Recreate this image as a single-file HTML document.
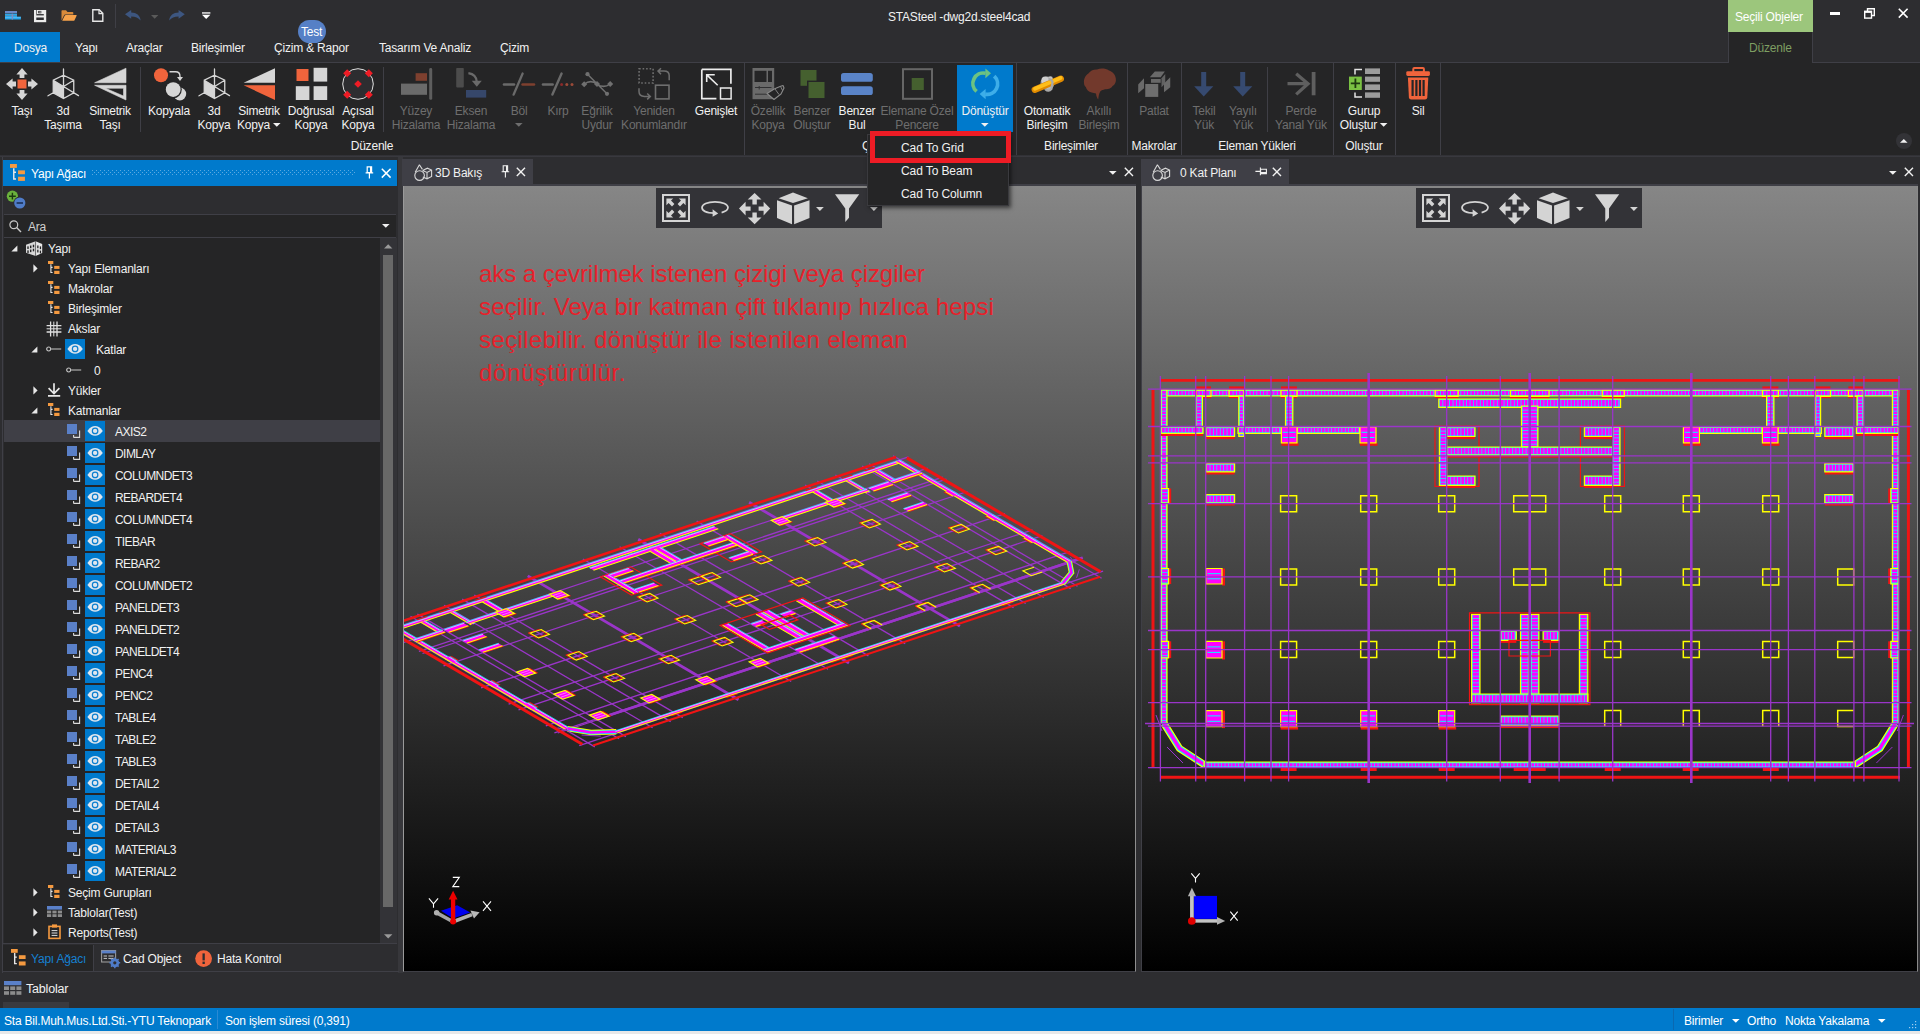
<!DOCTYPE html><html><head><meta charset="utf-8"><title>STASteel</title><style>*{box-sizing:border-box;margin:0;padding:0}
html,body{width:1920px;height:1034px;overflow:hidden;background:#2d2d30}
body{font-family:"Liberation Sans",sans-serif;font-size:12px;color:#f1f1f1;position:relative;letter-spacing:-0.2px}
.abs{position:absolute}
.t{position:absolute;white-space:nowrap;line-height:14px}
svg{position:absolute;overflow:visible}
/* title */
#title{left:0;top:0;width:1920px;height:32px;background:#2d2d30}
#tabs{left:0;top:32px;width:1920px;height:30px;background:#2d2d30}
#tabline{left:0;top:62px;width:1920px;height:1px;background:#3f3f46}
#ribbon{left:0;top:63px;width:1920px;height:93px;background:#252526}
#ribline{left:0;top:155px;width:1920px;height:2px;background:linear-gradient(#2e2e32,#3c3c42)}
.tab{position:absolute;top:32px;height:30px;line-height:30px;font-size:12px;white-space:nowrap}
.rb{position:absolute;top:104px;text-align:center;line-height:14px;white-space:nowrap;transform:translateX(-50%)}
.dis{color:#6e6e6e}
.gl{position:absolute;top:139px;line-height:14px;white-space:nowrap;transform:translateX(-50%)}
.sep{position:absolute;width:1px;background:#3f3f46}
/* left panel */
#lp{left:2px;top:157px;width:401px;height:816px;border-left:1px solid #3f3f46;border-right:5px solid #37373b;background:#2d2d30}
#lphead{left:3px;top:160px;width:394px;height:26px;background:#007acc}
#search{left:4px;top:214px;width:392px;height:24px;background:#252526;border-top:1px solid #3f3f46;border-bottom:1px solid #3f3f46}
#tree{left:4px;top:238px;width:376px;height:706px;background:#252526}
.tr{position:absolute;left:0;width:376px;height:20px}
.sel{background:#3f3f46}
.tt{position:absolute;top:3px;line-height:14px;white-space:nowrap}
/* viewports */
.vp{background:linear-gradient(#868686,#000) no-repeat;background-size:100% 785px;background-color:#000}
#st{left:0;top:1008px;width:1920px;height:23px;background:#007acc}
#stb{left:0;top:1031px;width:1920px;height:3px;background:#e8e8e8}
</style></head><body><div id="title" class="abs"></div>
<div class="t" style="left:888px;top:10px;font-size:12px">STASteel -dwg2d.steel4cad</div>
<svg style="left:5px;top:11.2px" width="16" height="9" viewBox="0 0 16 9" ><rect x="0" y="0" width="12" height="2.3" fill="#6a88c6"/><rect x="0" y="2.7" width="12" height="1.6" fill="#29a9ee"/><rect x="0" y="4.7" width="12" height="1.5" fill="#29a9ee"/><rect x="0" y="5.6" width="15.9" height="2.9" fill="#29a9ee"/><rect x="0" y="4.3" width="12" height="0.4" fill="#8fd0f6"/><rect x="0" y="6.3" width="15.9" height="0.4" fill="#8fd0f6"/><rect x="6.6" y="2.7" width="1.5" height="5.8" fill="#7a8cc4"/></svg><svg style="left:33.9px;top:9.8px" width="13" height="13" viewBox="0 0 13 13" ><rect x="0" y="0" width="12.2" height="12.2" fill="#ececec"/><rect x="2.3" y="0" width="0.6" height="4.1" fill="#2d2d30"/><rect x="9.8" y="0" width="0" height="4.1" fill="#2d2d30"/><rect x="4.2" y="0.9" width="3.1" height="2.4" fill="#2d2d30"/><rect x="5.6" y="1.3" width="0.9" height="1.6" fill="#ececec"/><rect x="2.3" y="4.1" width="7.5" height="1.3" fill="#2d2d30"/><rect x="2.3" y="7.5" width="7.5" height="2.5" fill="#2d2d30"/></svg><svg style="left:61px;top:10px" width="16" height="11" viewBox="0 0 16 11" ><path d="M0.5 10.5V1Q0.5 0.3 1.2 0.3H5L6.5 2H11.5Q12.3 2 12.3 2.8V4.4H4.2Q3.4 4.4 3.1 5.2Z" fill="#d98a3a"/><path d="M1.2 10.7L3.8 5.6Q4.1 5 4.8 5H15.2Q16 5 15.6 5.8L13.5 10.2Q13.2 10.7 12.6 10.7Z" fill="#f7a24a"/></svg><svg style="left:92px;top:9px" width="12" height="13" viewBox="0 0 12 13" ><path d="M0.8 0.8H7.2L10.8 4.4V12.2H0.8Z" fill="none" stroke="#e6e6e6" stroke-width="1.4"/><path d="M7 0.8V4.6H10.8" fill="none" stroke="#e6e6e6" stroke-width="1.2"/></svg><div class="sep" style="left:115px;top:4px;height:24px"></div><svg style="left:125px;top:10px" width="16" height="11" viewBox="0 0 16 11" ><path d="M0 4.2L6.2 0V2.6C11.5 2.6 15 5.4 15.6 10.4C13.2 7.6 10.6 6.6 6.2 6.4V8.8Z" fill="#3d5680"/></svg><svg style="left:151px;top:15px" width="8" height="4" viewBox="0 0 8 4" ><path d="M0 0H7.4L3.7 3.8Z" fill="#5a5a5a"/></svg><svg style="left:169px;top:10px" width="16" height="11" viewBox="0 0 16 11" ><path d="M15.8 4.2L9.6 0V2.6C4.3 2.6 0.8 5.4 0.2 10.4C2.6 7.6 5.2 6.6 9.6 6.4V8.8Z" fill="#3d5680"/></svg><svg style="left:202px;top:12px" width="9" height="8" viewBox="0 0 9 8" ><rect x="0" y="0.3" width="8.4" height="1.3" fill="#fff"/><path d="M0 2.8H8.4L4.2 7Z" fill="#fff"/></svg>
<div class="abs" style="left:1830px;top:12px;width:10px;height:3px;background:#fff"></div><svg style="left:1864px;top:8px" width="11" height="11" viewBox="0 0 11 11" ><path d="M3.5 3V0.7H10.3V7.5H8" fill="none" stroke="#fff" stroke-width="1.4"/><rect x="0.7" y="3.3" width="6.8" height="6.8" fill="none" stroke="#fff" stroke-width="1.4"/><rect x="0.7" y="3.3" width="6.8" height="1.6" fill="#fff"/></svg><svg style="left:1898px;top:8px" width="11" height="11" viewBox="0 0 11 11" ><path d="M0.8 0.8L9.6 9.6M9.6 0.8L0.8 9.6" stroke="#fff" stroke-width="1.6" fill="none"/></svg>
<div class="abs" style="left:1728px;top:0;width:85px;height:32px;background:#9cc67c"></div>
<div class="t" style="left:1735px;top:10px;color:#fff">Seçili Objeler</div>
<div class="abs" style="left:1728px;top:32px;width:85px;height:31px;background:#252526;border-left:1px solid #3f3f46;border-right:1px solid #3f3f46"></div>
<div class="t" style="left:1749px;top:41px;color:#7e9f62">Düzenle</div>
<div id="tabs" class="abs" style="z-index:-1"></div>
<div class="abs" style="left:0;top:32px;width:60px;height:30px;background:#007acc"></div>
<div class="t" style="left:14px;top:41px">Dosya</div>
<div class="t" style="left:75px;top:41px">Yapı</div>
<div class="t" style="left:126px;top:41px">Araçlar</div>
<div class="t" style="left:191px;top:41px">Birleşimler</div>
<div class="t" style="left:274px;top:41px">Çizim &amp; Rapor</div>
<div class="t" style="left:379px;top:41px">Tasarım Ve Analiz</div>
<div class="t" style="left:500px;top:41px">Çizim</div>
<div class="abs" style="left:298px;top:20px;width:28px;height:23px;border-radius:12px;background:#5680c6"></div>
<div class="t" style="left:301px;top:25px;color:#fff">Test</div>
<div id="tabline" class="abs"></div>
<div class="abs" style="left:1729px;top:62px;width:83px;height:1px;background:#252526"></div>
<div id="ribbon" class="abs"></div>
<div id="ribline" class="abs"></div>
<div class="abs" style="left:957px;top:65px;width:56px;height:67px;background:#007acc"></div><svg style="left:6px;top:68px" width="32" height="32" viewBox="0 0 32 32" ><rect x="11.5" y="11.5" width="9" height="9" fill="#f0643c"/><path d="M16 0L21.6 6.6H18.4V10H13.6V6.6H10.4Z" fill="#d6d6d6"/><path d="M16 32L21.6 25.4H18.4V22H13.6V25.4H10.4Z" fill="#d6d6d6"/><path d="M0 16L6.6 10.4V13.6H10V18.4H6.6V21.6Z" fill="#d6d6d6"/><path d="M32 16L25.4 10.4V13.6H22V18.4H25.4V21.6Z" fill="#d6d6d6"/></svg><div class="rb" style="left:22px">Taşı</div><svg style="left:47px;top:68px" width="32" height="32" viewBox="0 0 32 32" ><path d="M6.25 12.25L16.5 18.5V30.5L6.25 24.75Z" fill="#d6d6d6"/><path d="M16.5 1V30.5M16.5 7.25L26.75 12.25V24.75L16.5 30.5L6.25 24.75V12.25ZM6.25 12.25L16.5 18.5L26.75 12.25M16.5 18.5L31.5 27.6M6.25 24.75L1 27.8" fill="none" stroke="#d6d6d6" stroke-width="1.3" stroke-linecap="round"/></svg><div class="rb" style="left:63px">3d<br>Taşıma</div><svg style="left:94px;top:68px" width="32" height="32" viewBox="0 0 32 32" ><path d="M32 0.2V14.75H0.6Z" fill="#d6d6d6" stroke="#d6d6d6" stroke-width="0.6" stroke-linejoin="round"/><path d="M0.6 17.25H32V32ZM11.5 20.25L29.5 28V20.25Z" fill="#d6d6d6" fill-rule="evenodd" stroke="#d6d6d6" stroke-width="0.6" stroke-linejoin="round"/></svg><div class="rb" style="left:110px">Simetrik<br>Taşı</div><svg style="left:153px;top:68px" width="32" height="32" viewBox="0 0 32 32" ><circle cx="8" cy="7.2" r="7" fill="#f0643c"/><path d="M16.5 3.8H22.5Q27 3.8 27 8.5V9.5" fill="none" stroke="#d6d6d6" stroke-width="1.4"/><path d="M24 9H30L27 13Z" fill="#d6d6d6"/><circle cx="26.8" cy="26" r="6.4" fill="#d6d6d6"/><circle cx="20.2" cy="21.6" r="8.6" fill="#252526"/><circle cx="20.2" cy="21.6" r="7.4" fill="#d6d6d6"/></svg><div class="rb" style="left:169px">Kopyala</div><svg style="left:198px;top:68px" width="32" height="32" viewBox="0 0 32 32" ><path d="M6.25 12.25L16.5 18.5V30.5L6.25 24.75Z" fill="#d6d6d6"/><path d="M16.5 1V30.5M16.5 7.25L26.75 12.25V24.75L16.5 30.5L6.25 24.75V12.25ZM6.25 12.25L16.5 18.5L26.75 12.25M16.5 18.5L31.5 27.6M6.25 24.75L1 27.8" fill="none" stroke="#d6d6d6" stroke-width="1.3" stroke-linecap="round"/></svg><div class="rb" style="left:214px">3d<br>Kopya</div><svg style="left:243px;top:68px" width="32" height="32" viewBox="0 0 32 32" ><path d="M32 0.2V14.75H0.6Z" fill="#d6d6d6"/><path d="M0.6 17.25H32V32Z" fill="#f0643c"/></svg><div class="rb" style="left:259px">Simetrik<br>Kopya<svg style="position:relative;display:inline-block;margin-left:3px;top:-2px" width="8" height="4" viewBox="0 0 8 4"><path d="M0 0H7.6L3.8 3.8Z" fill="#f1f1f1"/></svg></div><svg style="left:295px;top:68px" width="32" height="32" viewBox="0 0 32 32" ><rect x="1.5" y="1" width="12" height="12" fill="#f0643c"/><rect x="18.6" y="-0.2" width="13.6" height="13.8" fill="#d6d6d6"/><rect x="0.8" y="18.2" width="13.6" height="13.8" fill="#d6d6d6"/><rect x="18.6" y="18.2" width="13.6" height="13.8" fill="#d6d6d6"/></svg><div class="rb" style="left:311px">Doğrusal<br>Kopya</div><svg style="left:342px;top:68px" width="32" height="32" viewBox="0 0 32 32" ><circle cx="16" cy="16" r="15.3" fill="#2d2d30" stroke="#e0e0e0" stroke-width="1"/><path d="M16 12.2L19.8 16L16 19.8L12.2 16Z" fill="#ee1c25"/><path d="M5.2 1.2000000000000002L9.2 5.2L5.2 9.2L1.2000000000000002 5.2Z" fill="#ee1c25"/><path d="M26.8 1.2000000000000002L30.8 5.2L26.8 9.2L22.8 5.2Z" fill="#ee1c25"/><path d="M5.2 22.8L9.2 26.8L5.2 30.8L1.2000000000000002 26.8Z" fill="#ee1c25"/><path d="M26.8 22.8L30.8 26.8L26.8 30.8L22.8 26.8Z" fill="#ee1c25"/></svg><div class="rb" style="left:358px">Açısal<br>Kopya</div><svg style="left:400px;top:68px" width="32" height="32" viewBox="0 0 32 32" ><rect x="1" y="15.6" width="26" height="11.2" fill="#6a6a6a"/><rect x="15.6" y="5.2" width="11.4" height="7.6" fill="#7e402f"/><rect x="29.2" y="0" width="3" height="31.8" rx="1.4" fill="#5e5e5e"/></svg><div class="rb dis" style="left:416px">Yüzey<br>Hizalama</div><svg style="left:455px;top:68px" width="32" height="32" viewBox="0 0 32 32" ><rect x="1.2" y="0" width="7.6" height="19.4" rx="0.8" fill="#4c4c4c"/><rect x="11" y="22" width="20.2" height="7.6" fill="#36476a"/><path d="M13.4 5.2Q21.4 6.4 21.8 14" fill="none" stroke="#6a6a6a" stroke-width="2.2"/><path d="M16.8 12.8H26.8L21.8 18.8Z" fill="#6a6a6a"/></svg><div class="rb dis" style="left:471px">Eksen<br>Hizalama</div><svg style="left:503px;top:68px" width="32" height="32" viewBox="0 0 32 32" ><path d="M1 16.5H11" stroke="#6a6a6a" stroke-width="2.6" stroke-linecap="round"/><path d="M10.6 26.6L19.6 5.6" stroke="#6a6a6a" stroke-width="2.4" stroke-linecap="round"/><path d="M19.6 16.5H31" stroke="#7e402f" stroke-width="2.6" stroke-linecap="round"/></svg><div class="rb dis" style="left:519px">Böl</div><svg style="left:515px;top:123px" width="8" height="4" viewBox="0 0 8 4" ><path d="M0 0H7.6L3.8 3.8Z" fill="#6e6e6e"/></svg><svg style="left:542px;top:68px" width="32" height="32" viewBox="0 0 32 32" ><path d="M1 16.5H10.6" stroke="#6a6a6a" stroke-width="2.6" stroke-linecap="round"/><path d="M10.4 26.6L19.6 5.6" stroke="#6a6a6a" stroke-width="2.4" stroke-linecap="round"/><circle cx="19.6" cy="16.5" r="1.5" fill="#8a2a2a"/><circle cx="24.8" cy="16.5" r="1.5" fill="#9a4a38"/><circle cx="30" cy="16.5" r="1.5" fill="#9a4a38"/></svg><div class="rb dis" style="left:558px">Kırp</div><svg style="left:581px;top:68px" width="32" height="32" viewBox="0 0 32 32" ><path d="M3.2 16.25C8 12.4 12 13 16 16C20 19 24 19.6 29.2 16M6.5 6.2L26 25.8" fill="none" stroke="#707070" stroke-width="1.5"/><path d="M3.2 13.25L6.2 16.25L3.2 19.25L0.20000000000000018 16.25Z" fill="#707070"/><path d="M16 13L19 16L16 19L13 16Z" fill="#707070"/><path d="M29.2 13L32.2 16L29.2 19L26.2 16Z" fill="#707070"/><circle cx="6.5" cy="6.2" r="2.1" fill="#707070"/><circle cx="26" cy="25.8" r="2.1" fill="#707070"/></svg><div class="rb dis" style="left:597px">Eğrilik<br>Uydur</div><svg style="left:638px;top:68px" width="32" height="32" viewBox="0 0 32 32" ><rect x="1.1" y="0.8" width="14" height="14.2" fill="none" stroke="#6e6e6e" stroke-width="1.6" stroke-dasharray="1.6 1.9"/><rect x="17.5" y="17.2" width="13.5" height="13.7" fill="none" stroke="#6e6e6e" stroke-width="1.6"/><path d="M31.2 12.3V7.6Q31.2 3 26 3H20.4M23 0.2L20 3.1L23 6.2" fill="none" stroke="#6e6e6e" stroke-width="1.5"/><path d="M1 20.2V23.6Q1 28.4 6.4 28.4H12M9.2 25.5L12.3 28.4L9.2 31.4" fill="none" stroke="#6e6e6e" stroke-width="1.5"/></svg><div class="rb dis" style="left:654px">Yeniden<br>Konumlandır</div><svg style="left:700px;top:68px" width="32" height="32" viewBox="0 0 32 32" ><path d="M1.8 1.4H30.9V15.8M16.4 30.6H1.8V1.4" fill="none" stroke="#ececec" stroke-width="1.7"/><rect x="20.5" y="20" width="10.6" height="10.9" fill="none" stroke="#ececec" stroke-width="1.5"/><path d="M17.7 17.25L6.8 6.8M6.7 13.9V6.7H14.75" fill="none" stroke="#ececec" stroke-width="1.6"/></svg><div class="rb" style="left:716px">Genişlet</div><svg style="left:752px;top:68px" width="32" height="32" viewBox="0 0 32 32" ><rect x="0.5" y="0" width="21.7" height="31.2" fill="#6a6a6a"/><rect x="2.5" y="2.8" width="12" height="11.2" fill="#252526"/><rect x="16" y="2.8" width="4" height="11.2" fill="#252526"/><path d="M3 19.5H19.5M7.2 18V21.5M3 26.2H16" fill="none" stroke="#303032" stroke-width="1"/><path d="M15 25.5L22.2 21L28 18.5L31 17.5L32 20L29 26L22 31.5Z" fill="#252526" stroke="#8a8a8a" stroke-width="1.1" stroke-linejoin="round"/><path d="M23 21L27 26.5M28.5 18.4L30.6 22.6" stroke="#8a8a8a" stroke-width="0.9"/></svg><div class="rb dis" style="left:768px">Özellik<br>Kopya</div><svg style="left:796px;top:68px" width="32" height="32" viewBox="0 0 32 32" ><rect x="4.5" y="2" width="16" height="15.8" fill="#45602f"/><rect x="11" y="12.6" width="19" height="19" fill="#252526"/><rect x="12.5" y="14" width="16" height="16" fill="#45602f"/></svg><div class="rb dis" style="left:812px">Benzer<br>Oluştur</div><svg style="left:841px;top:68px" width="32" height="32" viewBox="0 0 32 32" ><rect x="0" y="5" width="31.8" height="8.8" rx="2.6" fill="#5a84c8"/><rect x="0" y="18.2" width="31.8" height="8.8" rx="2.6" fill="#5a84c8"/></svg><div class="rb" style="left:857px">Benzer<br>Bul</div><svg style="left:901px;top:68px" width="32" height="32" viewBox="0 0 32 32" ><rect x="2" y="1.2" width="29" height="29.6" fill="none" stroke="#666" stroke-width="2"/><rect x="10.7" y="10" width="12.1" height="12" fill="#45602f"/></svg><div class="rb dis" style="left:917px">Elemane Özel<br>Pencere</div><svg style="left:969px;top:68px" width="32" height="32" viewBox="0 0 32 32" ><path d="M7.6 23.4A10.4 10.4 0 0 1 16.6 5.3" fill="none" stroke="#6cc282" stroke-width="3.7"/><path d="M16.4 0.4L22 5.2L16.4 10.2Z" fill="#6cc282"/><path d="M25.2 8.2A10.4 10.4 0 0 1 16.2 26.1" fill="none" stroke="#3daee9" stroke-width="3.7"/><path d="M16.6 21L10.6 26L16.6 31.2Z" fill="#3daee9"/></svg><div class="rb" style="left:985px">Dönüştür</div><svg style="left:981px;top:123px" width="8" height="4" viewBox="0 0 8 4" ><path d="M0 0H7.6L3.8 3.8Z" fill="#f1f1f1"/></svg><svg style="left:1031px;top:68px" width="32" height="32" viewBox="0 0 32 32" ><circle cx="16.4" cy="15.4" r="6.9" fill="#9a9a9a"/><circle cx="14.2" cy="12.4" r="3.8" fill="#cfcfcf"/><circle cx="18.2" cy="19.6" r="2.8" fill="#b8b8b8"/><circle cx="19.4" cy="10.6" r="2.4" fill="#c4c4c4"/><path d="M3.8 21.8L29.8 10.8" stroke="#e08a00" stroke-width="6.4" stroke-linecap="round"/><path d="M4 20.8L29.6 10" stroke="#ffbe1a" stroke-width="3.8" stroke-linecap="round"/><path d="M14.4 21.4Q17.6 24.2 20.4 21L21.6 14.2Q20.4 11 17.6 11.2" fill="none" stroke="#a8a8a8" stroke-width="2.2"/></svg><div class="rb" style="left:1047px">Otomatik<br>Birleşim</div><svg style="left:1083px;top:68px" width="32" height="32" viewBox="0 0 32 32" ><path d="M1 15C0.6 11 2.4 7.4 5.4 5.6C7 2.8 10.4 1.2 14 1.4C17.6 0 22.6 0.2 26 2.4C29.6 3.4 32.4 6.6 32.8 10.4C33.4 13.4 32.2 16.4 29.6 18C28 20.4 25 21.6 22 21.2C20.4 22 18.6 22 17.4 23.2C16 25.4 15.6 28.4 15.2 31.4C14 30.2 13.2 28 13 25.6C11.6 25.2 10 25.2 8.6 24.6C5.6 23.8 3.4 21.6 2.8 19C1.6 18 1 16.6 1 15Z" fill="#72392c"/></svg><div class="rb dis" style="left:1099px">Akıllı<br>Birleşim</div><svg style="left:1138px;top:68px" width="32" height="32" viewBox="0 0 32 32" ><rect x="7.25" y="16" width="13" height="12.9" fill="#6e6e6e"/><path d="M11.8 9.3L16.8 3.5H26.8L22.7 9.3Z" fill="#6a6a6a"/><rect x="13" y="11" width="9.7" height="3.8" fill="#686868"/><path d="M23.5 10.2L27.25 6V15.2L23.5 19.3Z" fill="#626262"/><path d="M0.2 16.4L6 10.2V20.2L0.2 25.2Z" fill="#6a6a6a"/><path d="M26 15.6L32.25 9.3V19.3L26 24.3Z" fill="#6a6a6a"/></svg><div class="rb dis" style="left:1154px">Patlat</div><svg style="left:1188px;top:68px" width="32" height="32" viewBox="0 0 32 32" ><rect x="13.2" y="4" width="5" height="15.4" fill="#364a70"/><path d="M6.2 18.2H25.3L15.7 28.4Z" fill="#364a70"/></svg><div class="rb dis" style="left:1204px">Tekil<br>Yük</div><svg style="left:1227px;top:68px" width="32" height="32" viewBox="0 0 32 32" ><rect x="13.2" y="4" width="5" height="15.4" fill="#364a70"/><path d="M6.2 18.2H25.3L15.7 28.4Z" fill="#364a70"/></svg><div class="rb dis" style="left:1243px">Yayılı<br>Yük</div><svg style="left:1285px;top:68px" width="32" height="32" viewBox="0 0 32 32" ><path d="M2.5 15.7H22.4M11.2 5.8L23 15.7L11.2 26.4" fill="none" stroke="#5f5f5f" stroke-width="3.3"/><rect x="26.7" y="4" width="3.8" height="23.3" fill="#5f5f5f"/></svg><div class="rb dis" style="left:1301px">Perde<br>Yanal Yük</div><svg style="left:1348px;top:68px" width="32" height="32" viewBox="0 0 32 32" ><rect x="1" y="8.6" width="12.8" height="13.4" fill="#7ac143"/><path d="M7.4 10.6V20M2.8 15.3H12" stroke="#1e3a10" stroke-width="1.8"/><rect x="17" y="0.4" width="15" height="5.6" fill="#9c9c9c"/><rect x="17" y="8.6" width="15" height="5.2" fill="#9c9c9c"/><rect x="17" y="16.4" width="15" height="5.6" fill="#9c9c9c"/><rect x="17" y="24.4" width="15" height="5.4" fill="#9c9c9c"/><path d="M7 6.4V1.4H14M7 24.4V29H14" fill="none" stroke="#e4e4e4" stroke-width="1.5"/></svg><div class="rb" style="left:1364px">Gurup<br>Oluştur<svg style="position:relative;display:inline-block;margin-left:3px;top:-2px" width="8" height="4" viewBox="0 0 8 4"><path d="M0 0H7.6L3.8 3.8Z" fill="#f1f1f1"/></svg></div><svg style="left:1402px;top:68px" width="32" height="32" viewBox="0 0 32 32" ><g transform="translate(-1.7 0)"><rect x="13" y="0" width="10.6" height="4.6" rx="1" fill="none" stroke="#f0643c" stroke-width="2"/><rect x="6" y="3.2" width="23.6" height="4.8" rx="1.4" fill="#f0643c"/><path d="M7.6 9.6H28L27 29.4Q26.8 31.4 24.8 31.4H10.8Q8.8 31.4 8.6 29.4Z" fill="#f0643c"/><rect x="11.2" y="12" width="2.2" height="16" fill="#252526"/><rect x="15" y="12" width="2.2" height="16" fill="#252526"/><rect x="18.6" y="12" width="2.2" height="16" fill="#252526"/><rect x="22.2" y="12" width="2.2" height="16" fill="#252526"/></g></svg><div class="rb" style="left:1418px">Sil</div><div class="sep" style="left:140px;top:67px;height:65px"></div><div class="sep" style="left:383px;top:67px;height:65px"></div><div class="sep" style="left:1267px;top:67px;height:65px"></div><div class="sep" style="left:744px;top:63px;height:92px"></div><div class="sep" style="left:1016px;top:63px;height:92px"></div><div class="sep" style="left:1127px;top:63px;height:92px"></div><div class="sep" style="left:1181px;top:63px;height:92px"></div><div class="sep" style="left:1333px;top:63px;height:92px"></div><div class="sep" style="left:1395px;top:63px;height:92px"></div><div class="sep" style="left:1440px;top:63px;height:92px"></div><div class="gl" style="left:372px">Düzenle</div><div class="gl" style="left:1071px">Birleşimler</div><div class="gl" style="left:1154px">Makrolar</div><div class="gl" style="left:1257px">Eleman Yükleri</div><div class="gl" style="left:1364px">Oluştur</div><div class="t" style="left:862px;top:139px">Ç</div><div class="abs" style="left:1896px;top:133px;width:16px;height:16px;border-radius:8px;background:#333337"></div><svg style="left:1900px;top:139px" width="8" height="4" viewBox="0 0 8 4" ><path d="M0 3.8H7.6L3.8 0Z" fill="#f1f1f1"/></svg>
<div id="lp" class="abs"></div>
<div id="lphead" class="abs"></div>
<svg style="left:10.2px;top:163.8px" width="16.900000000000002" height="18.2" viewBox="0 0 13 14"><rect x="0" y="0" width="5.3" height="3" fill="#f59a40"/><path d="M2.9 3.2V11.5H4.6M2.9 6.4H4.6" fill="none" stroke="#e8e8e8" stroke-width="1.1"/><rect x="6.2" y="4.9" width="5.3" height="3" fill="#f59a40"/><rect x="6.2" y="9.8" width="5.3" height="3.2" fill="#f59a40"/></svg><div class="t" style="left:31px;top:167px;color:#fff">Yapı Ağacı</div><svg style="left:92px;top:170px" width="264" height="6"><defs><pattern id="dp" width="4" height="4" patternUnits="userSpaceOnUse"><rect x="0" y="0" width="1" height="1" fill="#5aa9e0"/><rect x="2" y="2" width="1" height="1" fill="#5aa9e0"/></pattern></defs><rect width="264" height="5" fill="url(#dp)"/></svg><svg style="left:365px;top:166px" width="9" height="13" viewBox="0 0 9 13" ><path d="M2.2 0.8H6.6V6.6H2.2ZM0.6 6.8H8.2M4.4 6.8V12.4" fill="none" stroke="#fff" stroke-width="1.2"/><rect x="5" y="0.8" width="1.6" height="5.8" fill="#fff"/></svg><svg style="left:381px;top:168px" width="11" height="11" viewBox="0 0 11 11" ><path d="M0.8 0.8L9.6 9.6M9.6 0.8L0.8 9.6" stroke="#fff" stroke-width="1.5" fill="none"/></svg><svg style="left:6.2px;top:189.6px" width="22" height="20" viewBox="0 0 22 20" ><circle cx="6.4" cy="6.2" r="5.6" fill="#6ab13c"/><path d="M6.4 2.8V9.6M3 6.2H9.8" stroke="#1c3a10" stroke-width="1.4"/><circle cx="13.8" cy="13" r="6.4" fill="#2d2d30"/><circle cx="13.8" cy="13" r="5.6" fill="#4f7cc8"/><path d="M10.6 13H17" stroke="#1a2f55" stroke-width="1.6"/></svg><div id="search" class="abs"></div><svg style="left:9px;top:220px" width="13" height="13" viewBox="0 0 13 13" ><circle cx="4.8" cy="4.8" r="3.9" fill="none" stroke="#c8c8c8" stroke-width="1.2"/><path d="M7.6 7.6L12 12" stroke="#c8c8c8" stroke-width="1.4"/></svg><div class="t" style="left:28px;top:220px;color:#d0d0d0">Ara</div><svg style="left:382px;top:224px" width="8" height="4" viewBox="0 0 8 4" ><path d="M0 0H7.6L3.8 3.8Z" fill="#f1f1f1"/></svg><div id="tree" class="abs"></div><svg style="left:11px;top:244.5px" width="7" height="7" viewBox="0 0 7 7" ><path d="M6.4 0.4V6.4H0.4Z" fill="#e8e8e8"/></svg><svg style="left:25.9px;top:240.5px" width="17" height="16" viewBox="0 0 17 16" ><path d="M0 3.8L9.6 0.2V14.9L0 11.7Z" fill="#d8d8d8"/><path d="M9.6 0.2L16.2 3V11.9L9.6 14.9Z" fill="#e8e8e8"/><path d="M9.6 0.2V14.9" stroke="#252526" stroke-width="0.5"/><rect x="1.3" y="5.37" width="1.4" height="2.6" fill="#252526"/><rect x="1.3" y="9.370000000000001" width="1.4" height="2.6" fill="#252526"/><rect x="4.0" y="4.5600000000000005" width="1.4" height="2.6" fill="#252526"/><rect x="4.0" y="8.56" width="1.4" height="2.6" fill="#252526"/><rect x="6.8" y="3.7200000000000006" width="1.4" height="2.6" fill="#252526"/><rect x="6.8" y="7.720000000000001" width="1.4" height="2.6" fill="#252526"/><rect x="11.2" y="4.47" width="1.3" height="2.8" fill="#252526"/><rect x="11.2" y="8.67" width="1.3" height="2.8" fill="#252526"/><rect x="13.8" y="5.380000000000001" width="1.3" height="2.8" fill="#252526"/><rect x="13.8" y="9.58" width="1.3" height="2.8" fill="#252526"/></svg><div class="t" style="left:48px;top:242px">Yapı</div><svg style="left:33px;top:264px" width="5" height="9" viewBox="0 0 5 9" ><path d="M0.4 0.2L4.6 4.4L0.4 8.6Z" fill="#e8e8e8"/></svg><svg style="left:47.8px;top:261.1px" width="13.0" height="14.0" viewBox="0 0 13 14"><rect x="0" y="0" width="5.3" height="3" fill="#f59a40"/><path d="M2.9 3.2V11.5H4.6M2.9 6.4H4.6" fill="none" stroke="#e8e8e8" stroke-width="1.1"/><rect x="6.2" y="4.9" width="5.3" height="3" fill="#f59a40"/><rect x="6.2" y="9.8" width="5.3" height="3.2" fill="#f59a40"/></svg><div class="t" style="left:68px;top:262px">Yapı Elemanları</div><svg style="left:47.8px;top:281.1px" width="13.0" height="14.0" viewBox="0 0 13 14"><rect x="0" y="0" width="5.3" height="3" fill="#f59a40"/><path d="M2.9 3.2V11.5H4.6M2.9 6.4H4.6" fill="none" stroke="#e8e8e8" stroke-width="1.1"/><rect x="6.2" y="4.9" width="5.3" height="3" fill="#f59a40"/><rect x="6.2" y="9.8" width="5.3" height="3.2" fill="#f59a40"/></svg><div class="t" style="left:68px;top:282px">Makrolar</div><svg style="left:47.8px;top:301.1px" width="13.0" height="14.0" viewBox="0 0 13 14"><rect x="0" y="0" width="5.3" height="3" fill="#f59a40"/><path d="M2.9 3.2V11.5H4.6M2.9 6.4H4.6" fill="none" stroke="#e8e8e8" stroke-width="1.1"/><rect x="6.2" y="4.9" width="5.3" height="3" fill="#f59a40"/><rect x="6.2" y="9.8" width="5.3" height="3.2" fill="#f59a40"/></svg><div class="t" style="left:68px;top:302px">Birleşimler</div><svg style="left:46px;top:321px" width="16" height="16" viewBox="0 0 16 16" ><path d="M4.6 0.6V15.4M11 0.6V15.4M0.6 4.6H15.4M0.6 11H15.4" fill="none" stroke="#e0e0e0" stroke-width="1.3"/><path d="M7.8 0.6V15.4M0.6 7.8H15.4" fill="none" stroke="#e0e0e0" stroke-width="1"/></svg><div class="t" style="left:68px;top:322px">Akslar</div><svg style="left:31px;top:345.5px" width="7" height="7" viewBox="0 0 7 7" ><path d="M6.4 0.4V6.4H0.4Z" fill="#e8e8e8"/></svg><svg style="left:46px;top:346px" width="16" height="6" viewBox="0 0 16 6" ><circle cx="2.7" cy="3" r="2" fill="none" stroke="#c4c4c4" stroke-width="1.2"/><path d="M5 3H15.2" stroke="#7c7c7c" stroke-width="1.9"/></svg><svg style="left:65px;top:339px" width="20" height="20" viewBox="0 0 20 20" ><rect width="20" height="20" fill="#007acc"/><path d="M2.4 9.9C5 6.2 7.6 5.1 10.1 5.1S15.2 6.2 17.8 9.9C15.2 13.6 12.6 14.7 10.1 14.7S5 13.6 2.4 9.9Z" fill="#dde6ee"/><circle cx="10.1" cy="9.9" r="2.75" fill="none" stroke="#0a7fd0" stroke-width="1.2"/></svg><div class="t" style="left:96px;top:343px">Katlar</div><svg style="left:66px;top:367px" width="16" height="6" viewBox="0 0 16 6" ><circle cx="2.7" cy="3" r="2" fill="none" stroke="#c4c4c4" stroke-width="1.2"/><path d="M5 3H15.2" stroke="#7c7c7c" stroke-width="1.9"/></svg><div class="t" style="left:94px;top:364px">0</div><svg style="left:33px;top:386px" width="5" height="9" viewBox="0 0 5 9" ><path d="M0.4 0.2L4.6 4.4L0.4 8.6Z" fill="#e8e8e8"/></svg><svg style="left:47px;top:383px" width="14" height="15" viewBox="0 0 14 15" ><path d="M7 0.2V10.2M1.6 5.2L7 10.6L12.4 5.2M1 12.9H13.2" fill="none" stroke="#e8e8e8" stroke-width="1.7"/></svg><div class="t" style="left:68px;top:384px">Yükler</div><svg style="left:31px;top:406.5px" width="7" height="7" viewBox="0 0 7 7" ><path d="M6.4 0.4V6.4H0.4Z" fill="#e8e8e8"/></svg><svg style="left:47.8px;top:403.1px" width="13.0" height="14.0" viewBox="0 0 13 14"><rect x="0" y="0" width="5.3" height="3" fill="#f59a40"/><path d="M2.9 3.2V11.5H4.6M2.9 6.4H4.6" fill="none" stroke="#e8e8e8" stroke-width="1.1"/><rect x="6.2" y="4.9" width="5.3" height="3" fill="#f59a40"/><rect x="6.2" y="9.8" width="5.3" height="3.2" fill="#f59a40"/></svg><div class="t" style="left:68px;top:404px">Katmanlar</div><div class="abs" style="left:4px;top:420px;width:376px;height:22px;background:#3f3f46"></div><svg style="left:67px;top:424px" width="14" height="14" viewBox="0 0 14 14" ><rect x="0" y="0" width="10" height="10" fill="#5a80c8"/><path d="M12.6 6.6V13.4H6.6M6.6 11V13.4" fill="none" stroke="#dcdcdc" stroke-width="1.1"/></svg><svg style="left:85px;top:421px" width="20" height="20" viewBox="0 0 20 20" ><rect width="20" height="20" fill="#007acc"/><path d="M2.4 9.9C5 6.2 7.6 5.1 10.1 5.1S15.2 6.2 17.8 9.9C15.2 13.6 12.6 14.7 10.1 14.7S5 13.6 2.4 9.9Z" fill="#dde6ee"/><circle cx="10.1" cy="9.9" r="2.75" fill="none" stroke="#0a7fd0" stroke-width="1.2"/></svg><div class="t" style="left:115px;top:425px;letter-spacing:-0.55px">AXIS2</div><svg style="left:67px;top:446px" width="14" height="14" viewBox="0 0 14 14" ><rect x="0" y="0" width="10" height="10" fill="#5a80c8"/><path d="M12.6 6.6V13.4H6.6M6.6 11V13.4" fill="none" stroke="#dcdcdc" stroke-width="1.1"/></svg><svg style="left:85px;top:443px" width="20" height="20" viewBox="0 0 20 20" ><rect width="20" height="20" fill="#007acc"/><path d="M2.4 9.9C5 6.2 7.6 5.1 10.1 5.1S15.2 6.2 17.8 9.9C15.2 13.6 12.6 14.7 10.1 14.7S5 13.6 2.4 9.9Z" fill="#dde6ee"/><circle cx="10.1" cy="9.9" r="2.75" fill="none" stroke="#0a7fd0" stroke-width="1.2"/></svg><div class="t" style="left:115px;top:447px;letter-spacing:-0.55px">DIMLAY</div><svg style="left:67px;top:468px" width="14" height="14" viewBox="0 0 14 14" ><rect x="0" y="0" width="10" height="10" fill="#5a80c8"/><path d="M12.6 6.6V13.4H6.6M6.6 11V13.4" fill="none" stroke="#dcdcdc" stroke-width="1.1"/></svg><svg style="left:85px;top:465px" width="20" height="20" viewBox="0 0 20 20" ><rect width="20" height="20" fill="#007acc"/><path d="M2.4 9.9C5 6.2 7.6 5.1 10.1 5.1S15.2 6.2 17.8 9.9C15.2 13.6 12.6 14.7 10.1 14.7S5 13.6 2.4 9.9Z" fill="#dde6ee"/><circle cx="10.1" cy="9.9" r="2.75" fill="none" stroke="#0a7fd0" stroke-width="1.2"/></svg><div class="t" style="left:115px;top:469px;letter-spacing:-0.55px">COLUMNDET3</div><svg style="left:67px;top:490px" width="14" height="14" viewBox="0 0 14 14" ><rect x="0" y="0" width="10" height="10" fill="#5a80c8"/><path d="M12.6 6.6V13.4H6.6M6.6 11V13.4" fill="none" stroke="#dcdcdc" stroke-width="1.1"/></svg><svg style="left:85px;top:487px" width="20" height="20" viewBox="0 0 20 20" ><rect width="20" height="20" fill="#007acc"/><path d="M2.4 9.9C5 6.2 7.6 5.1 10.1 5.1S15.2 6.2 17.8 9.9C15.2 13.6 12.6 14.7 10.1 14.7S5 13.6 2.4 9.9Z" fill="#dde6ee"/><circle cx="10.1" cy="9.9" r="2.75" fill="none" stroke="#0a7fd0" stroke-width="1.2"/></svg><div class="t" style="left:115px;top:491px;letter-spacing:-0.55px">REBARDET4</div><svg style="left:67px;top:512px" width="14" height="14" viewBox="0 0 14 14" ><rect x="0" y="0" width="10" height="10" fill="#5a80c8"/><path d="M12.6 6.6V13.4H6.6M6.6 11V13.4" fill="none" stroke="#dcdcdc" stroke-width="1.1"/></svg><svg style="left:85px;top:509px" width="20" height="20" viewBox="0 0 20 20" ><rect width="20" height="20" fill="#007acc"/><path d="M2.4 9.9C5 6.2 7.6 5.1 10.1 5.1S15.2 6.2 17.8 9.9C15.2 13.6 12.6 14.7 10.1 14.7S5 13.6 2.4 9.9Z" fill="#dde6ee"/><circle cx="10.1" cy="9.9" r="2.75" fill="none" stroke="#0a7fd0" stroke-width="1.2"/></svg><div class="t" style="left:115px;top:513px;letter-spacing:-0.55px">COLUMNDET4</div><svg style="left:67px;top:534px" width="14" height="14" viewBox="0 0 14 14" ><rect x="0" y="0" width="10" height="10" fill="#5a80c8"/><path d="M12.6 6.6V13.4H6.6M6.6 11V13.4" fill="none" stroke="#dcdcdc" stroke-width="1.1"/></svg><svg style="left:85px;top:531px" width="20" height="20" viewBox="0 0 20 20" ><rect width="20" height="20" fill="#007acc"/><path d="M2.4 9.9C5 6.2 7.6 5.1 10.1 5.1S15.2 6.2 17.8 9.9C15.2 13.6 12.6 14.7 10.1 14.7S5 13.6 2.4 9.9Z" fill="#dde6ee"/><circle cx="10.1" cy="9.9" r="2.75" fill="none" stroke="#0a7fd0" stroke-width="1.2"/></svg><div class="t" style="left:115px;top:535px;letter-spacing:-0.55px">TIEBAR</div><svg style="left:67px;top:556px" width="14" height="14" viewBox="0 0 14 14" ><rect x="0" y="0" width="10" height="10" fill="#5a80c8"/><path d="M12.6 6.6V13.4H6.6M6.6 11V13.4" fill="none" stroke="#dcdcdc" stroke-width="1.1"/></svg><svg style="left:85px;top:553px" width="20" height="20" viewBox="0 0 20 20" ><rect width="20" height="20" fill="#007acc"/><path d="M2.4 9.9C5 6.2 7.6 5.1 10.1 5.1S15.2 6.2 17.8 9.9C15.2 13.6 12.6 14.7 10.1 14.7S5 13.6 2.4 9.9Z" fill="#dde6ee"/><circle cx="10.1" cy="9.9" r="2.75" fill="none" stroke="#0a7fd0" stroke-width="1.2"/></svg><div class="t" style="left:115px;top:557px;letter-spacing:-0.55px">REBAR2</div><svg style="left:67px;top:578px" width="14" height="14" viewBox="0 0 14 14" ><rect x="0" y="0" width="10" height="10" fill="#5a80c8"/><path d="M12.6 6.6V13.4H6.6M6.6 11V13.4" fill="none" stroke="#dcdcdc" stroke-width="1.1"/></svg><svg style="left:85px;top:575px" width="20" height="20" viewBox="0 0 20 20" ><rect width="20" height="20" fill="#007acc"/><path d="M2.4 9.9C5 6.2 7.6 5.1 10.1 5.1S15.2 6.2 17.8 9.9C15.2 13.6 12.6 14.7 10.1 14.7S5 13.6 2.4 9.9Z" fill="#dde6ee"/><circle cx="10.1" cy="9.9" r="2.75" fill="none" stroke="#0a7fd0" stroke-width="1.2"/></svg><div class="t" style="left:115px;top:579px;letter-spacing:-0.55px">COLUMNDET2</div><svg style="left:67px;top:600px" width="14" height="14" viewBox="0 0 14 14" ><rect x="0" y="0" width="10" height="10" fill="#5a80c8"/><path d="M12.6 6.6V13.4H6.6M6.6 11V13.4" fill="none" stroke="#dcdcdc" stroke-width="1.1"/></svg><svg style="left:85px;top:597px" width="20" height="20" viewBox="0 0 20 20" ><rect width="20" height="20" fill="#007acc"/><path d="M2.4 9.9C5 6.2 7.6 5.1 10.1 5.1S15.2 6.2 17.8 9.9C15.2 13.6 12.6 14.7 10.1 14.7S5 13.6 2.4 9.9Z" fill="#dde6ee"/><circle cx="10.1" cy="9.9" r="2.75" fill="none" stroke="#0a7fd0" stroke-width="1.2"/></svg><div class="t" style="left:115px;top:601px;letter-spacing:-0.55px">PANELDET3</div><svg style="left:67px;top:622px" width="14" height="14" viewBox="0 0 14 14" ><rect x="0" y="0" width="10" height="10" fill="#5a80c8"/><path d="M12.6 6.6V13.4H6.6M6.6 11V13.4" fill="none" stroke="#dcdcdc" stroke-width="1.1"/></svg><svg style="left:85px;top:619px" width="20" height="20" viewBox="0 0 20 20" ><rect width="20" height="20" fill="#007acc"/><path d="M2.4 9.9C5 6.2 7.6 5.1 10.1 5.1S15.2 6.2 17.8 9.9C15.2 13.6 12.6 14.7 10.1 14.7S5 13.6 2.4 9.9Z" fill="#dde6ee"/><circle cx="10.1" cy="9.9" r="2.75" fill="none" stroke="#0a7fd0" stroke-width="1.2"/></svg><div class="t" style="left:115px;top:623px;letter-spacing:-0.55px">PANELDET2</div><svg style="left:67px;top:644px" width="14" height="14" viewBox="0 0 14 14" ><rect x="0" y="0" width="10" height="10" fill="#5a80c8"/><path d="M12.6 6.6V13.4H6.6M6.6 11V13.4" fill="none" stroke="#dcdcdc" stroke-width="1.1"/></svg><svg style="left:85px;top:641px" width="20" height="20" viewBox="0 0 20 20" ><rect width="20" height="20" fill="#007acc"/><path d="M2.4 9.9C5 6.2 7.6 5.1 10.1 5.1S15.2 6.2 17.8 9.9C15.2 13.6 12.6 14.7 10.1 14.7S5 13.6 2.4 9.9Z" fill="#dde6ee"/><circle cx="10.1" cy="9.9" r="2.75" fill="none" stroke="#0a7fd0" stroke-width="1.2"/></svg><div class="t" style="left:115px;top:645px;letter-spacing:-0.55px">PANELDET4</div><svg style="left:67px;top:666px" width="14" height="14" viewBox="0 0 14 14" ><rect x="0" y="0" width="10" height="10" fill="#5a80c8"/><path d="M12.6 6.6V13.4H6.6M6.6 11V13.4" fill="none" stroke="#dcdcdc" stroke-width="1.1"/></svg><svg style="left:85px;top:663px" width="20" height="20" viewBox="0 0 20 20" ><rect width="20" height="20" fill="#007acc"/><path d="M2.4 9.9C5 6.2 7.6 5.1 10.1 5.1S15.2 6.2 17.8 9.9C15.2 13.6 12.6 14.7 10.1 14.7S5 13.6 2.4 9.9Z" fill="#dde6ee"/><circle cx="10.1" cy="9.9" r="2.75" fill="none" stroke="#0a7fd0" stroke-width="1.2"/></svg><div class="t" style="left:115px;top:667px;letter-spacing:-0.55px">PENC4</div><svg style="left:67px;top:688px" width="14" height="14" viewBox="0 0 14 14" ><rect x="0" y="0" width="10" height="10" fill="#5a80c8"/><path d="M12.6 6.6V13.4H6.6M6.6 11V13.4" fill="none" stroke="#dcdcdc" stroke-width="1.1"/></svg><svg style="left:85px;top:685px" width="20" height="20" viewBox="0 0 20 20" ><rect width="20" height="20" fill="#007acc"/><path d="M2.4 9.9C5 6.2 7.6 5.1 10.1 5.1S15.2 6.2 17.8 9.9C15.2 13.6 12.6 14.7 10.1 14.7S5 13.6 2.4 9.9Z" fill="#dde6ee"/><circle cx="10.1" cy="9.9" r="2.75" fill="none" stroke="#0a7fd0" stroke-width="1.2"/></svg><div class="t" style="left:115px;top:689px;letter-spacing:-0.55px">PENC2</div><svg style="left:67px;top:710px" width="14" height="14" viewBox="0 0 14 14" ><rect x="0" y="0" width="10" height="10" fill="#5a80c8"/><path d="M12.6 6.6V13.4H6.6M6.6 11V13.4" fill="none" stroke="#dcdcdc" stroke-width="1.1"/></svg><svg style="left:85px;top:707px" width="20" height="20" viewBox="0 0 20 20" ><rect width="20" height="20" fill="#007acc"/><path d="M2.4 9.9C5 6.2 7.6 5.1 10.1 5.1S15.2 6.2 17.8 9.9C15.2 13.6 12.6 14.7 10.1 14.7S5 13.6 2.4 9.9Z" fill="#dde6ee"/><circle cx="10.1" cy="9.9" r="2.75" fill="none" stroke="#0a7fd0" stroke-width="1.2"/></svg><div class="t" style="left:115px;top:711px;letter-spacing:-0.55px">TABLE4</div><svg style="left:67px;top:732px" width="14" height="14" viewBox="0 0 14 14" ><rect x="0" y="0" width="10" height="10" fill="#5a80c8"/><path d="M12.6 6.6V13.4H6.6M6.6 11V13.4" fill="none" stroke="#dcdcdc" stroke-width="1.1"/></svg><svg style="left:85px;top:729px" width="20" height="20" viewBox="0 0 20 20" ><rect width="20" height="20" fill="#007acc"/><path d="M2.4 9.9C5 6.2 7.6 5.1 10.1 5.1S15.2 6.2 17.8 9.9C15.2 13.6 12.6 14.7 10.1 14.7S5 13.6 2.4 9.9Z" fill="#dde6ee"/><circle cx="10.1" cy="9.9" r="2.75" fill="none" stroke="#0a7fd0" stroke-width="1.2"/></svg><div class="t" style="left:115px;top:733px;letter-spacing:-0.55px">TABLE2</div><svg style="left:67px;top:754px" width="14" height="14" viewBox="0 0 14 14" ><rect x="0" y="0" width="10" height="10" fill="#5a80c8"/><path d="M12.6 6.6V13.4H6.6M6.6 11V13.4" fill="none" stroke="#dcdcdc" stroke-width="1.1"/></svg><svg style="left:85px;top:751px" width="20" height="20" viewBox="0 0 20 20" ><rect width="20" height="20" fill="#007acc"/><path d="M2.4 9.9C5 6.2 7.6 5.1 10.1 5.1S15.2 6.2 17.8 9.9C15.2 13.6 12.6 14.7 10.1 14.7S5 13.6 2.4 9.9Z" fill="#dde6ee"/><circle cx="10.1" cy="9.9" r="2.75" fill="none" stroke="#0a7fd0" stroke-width="1.2"/></svg><div class="t" style="left:115px;top:755px;letter-spacing:-0.55px">TABLE3</div><svg style="left:67px;top:776px" width="14" height="14" viewBox="0 0 14 14" ><rect x="0" y="0" width="10" height="10" fill="#5a80c8"/><path d="M12.6 6.6V13.4H6.6M6.6 11V13.4" fill="none" stroke="#dcdcdc" stroke-width="1.1"/></svg><svg style="left:85px;top:773px" width="20" height="20" viewBox="0 0 20 20" ><rect width="20" height="20" fill="#007acc"/><path d="M2.4 9.9C5 6.2 7.6 5.1 10.1 5.1S15.2 6.2 17.8 9.9C15.2 13.6 12.6 14.7 10.1 14.7S5 13.6 2.4 9.9Z" fill="#dde6ee"/><circle cx="10.1" cy="9.9" r="2.75" fill="none" stroke="#0a7fd0" stroke-width="1.2"/></svg><div class="t" style="left:115px;top:777px;letter-spacing:-0.55px">DETAIL2</div><svg style="left:67px;top:798px" width="14" height="14" viewBox="0 0 14 14" ><rect x="0" y="0" width="10" height="10" fill="#5a80c8"/><path d="M12.6 6.6V13.4H6.6M6.6 11V13.4" fill="none" stroke="#dcdcdc" stroke-width="1.1"/></svg><svg style="left:85px;top:795px" width="20" height="20" viewBox="0 0 20 20" ><rect width="20" height="20" fill="#007acc"/><path d="M2.4 9.9C5 6.2 7.6 5.1 10.1 5.1S15.2 6.2 17.8 9.9C15.2 13.6 12.6 14.7 10.1 14.7S5 13.6 2.4 9.9Z" fill="#dde6ee"/><circle cx="10.1" cy="9.9" r="2.75" fill="none" stroke="#0a7fd0" stroke-width="1.2"/></svg><div class="t" style="left:115px;top:799px;letter-spacing:-0.55px">DETAIL4</div><svg style="left:67px;top:820px" width="14" height="14" viewBox="0 0 14 14" ><rect x="0" y="0" width="10" height="10" fill="#5a80c8"/><path d="M12.6 6.6V13.4H6.6M6.6 11V13.4" fill="none" stroke="#dcdcdc" stroke-width="1.1"/></svg><svg style="left:85px;top:817px" width="20" height="20" viewBox="0 0 20 20" ><rect width="20" height="20" fill="#007acc"/><path d="M2.4 9.9C5 6.2 7.6 5.1 10.1 5.1S15.2 6.2 17.8 9.9C15.2 13.6 12.6 14.7 10.1 14.7S5 13.6 2.4 9.9Z" fill="#dde6ee"/><circle cx="10.1" cy="9.9" r="2.75" fill="none" stroke="#0a7fd0" stroke-width="1.2"/></svg><div class="t" style="left:115px;top:821px;letter-spacing:-0.55px">DETAIL3</div><svg style="left:67px;top:842px" width="14" height="14" viewBox="0 0 14 14" ><rect x="0" y="0" width="10" height="10" fill="#5a80c8"/><path d="M12.6 6.6V13.4H6.6M6.6 11V13.4" fill="none" stroke="#dcdcdc" stroke-width="1.1"/></svg><svg style="left:85px;top:839px" width="20" height="20" viewBox="0 0 20 20" ><rect width="20" height="20" fill="#007acc"/><path d="M2.4 9.9C5 6.2 7.6 5.1 10.1 5.1S15.2 6.2 17.8 9.9C15.2 13.6 12.6 14.7 10.1 14.7S5 13.6 2.4 9.9Z" fill="#dde6ee"/><circle cx="10.1" cy="9.9" r="2.75" fill="none" stroke="#0a7fd0" stroke-width="1.2"/></svg><div class="t" style="left:115px;top:843px;letter-spacing:-0.55px">MATERIAL3</div><svg style="left:67px;top:864px" width="14" height="14" viewBox="0 0 14 14" ><rect x="0" y="0" width="10" height="10" fill="#5a80c8"/><path d="M12.6 6.6V13.4H6.6M6.6 11V13.4" fill="none" stroke="#dcdcdc" stroke-width="1.1"/></svg><svg style="left:85px;top:861px" width="20" height="20" viewBox="0 0 20 20" ><rect width="20" height="20" fill="#007acc"/><path d="M2.4 9.9C5 6.2 7.6 5.1 10.1 5.1S15.2 6.2 17.8 9.9C15.2 13.6 12.6 14.7 10.1 14.7S5 13.6 2.4 9.9Z" fill="#dde6ee"/><circle cx="10.1" cy="9.9" r="2.75" fill="none" stroke="#0a7fd0" stroke-width="1.2"/></svg><div class="t" style="left:115px;top:865px;letter-spacing:-0.55px">MATERIAL2</div><svg style="left:33px;top:888px" width="5" height="9" viewBox="0 0 5 9" ><path d="M0.4 0.2L4.6 4.4L0.4 8.6Z" fill="#e8e8e8"/></svg><svg style="left:47.8px;top:885.1px" width="13.0" height="14.0" viewBox="0 0 13 14"><rect x="0" y="0" width="5.3" height="3" fill="#f59a40"/><path d="M2.9 3.2V11.5H4.6M2.9 6.4H4.6" fill="none" stroke="#e8e8e8" stroke-width="1.1"/><rect x="6.2" y="4.9" width="5.3" height="3" fill="#f59a40"/><rect x="6.2" y="9.8" width="5.3" height="3.2" fill="#f59a40"/></svg><div class="t" style="left:68px;top:886px">Seçim Gurupları</div><svg style="left:33px;top:908px" width="5" height="9" viewBox="0 0 5 9" ><path d="M0.4 0.2L4.6 4.4L0.4 8.6Z" fill="#e8e8e8"/></svg><svg style="left:47px;top:906px" width="15" height="12" viewBox="0 0 15 12" ><rect x="0" y="0" width="15" height="3.6" fill="#5a80c8"/><rect x="0" y="4.6" width="4.2" height="2.8" fill="#8c8c8c"/><rect x="0" y="8.2" width="4.2" height="2.8" fill="#8c8c8c"/><rect x="5.4" y="4.6" width="4.2" height="2.8" fill="#8c8c8c"/><rect x="5.4" y="8.2" width="4.2" height="2.8" fill="#8c8c8c"/><rect x="10.8" y="4.6" width="4.2" height="2.8" fill="#8c8c8c"/><rect x="10.8" y="8.2" width="4.2" height="2.8" fill="#8c8c8c"/></svg><div class="t" style="left:68px;top:906px">Tablolar(Test)</div><svg style="left:33px;top:928px" width="5" height="9" viewBox="0 0 5 9" ><path d="M0.4 0.2L4.6 4.4L0.4 8.6Z" fill="#e8e8e8"/></svg><svg style="left:48px;top:924.3px" width="13" height="15" viewBox="0 0 13 15" ><rect x="1" y="2.4" width="11" height="12" fill="none" stroke="#f59a40" stroke-width="1.6"/><rect x="4" y="0.4" width="5" height="3.2" fill="#f59a40"/><path d="M3.6 6.6H9.4M3.6 9H9.4M3.6 11.4H9.4" stroke="#e0e0e0" stroke-width="1"/></svg><div class="t" style="left:68px;top:926px">Reports(Test)</div><div class="abs" style="left:380px;top:238px;width:17px;height:706px;background:#333337"></div><svg style="left:384px;top:244px" width="9" height="5" viewBox="0 0 9 5" ><path d="M0 4.4H8.4L4.2 0.2Z" fill="#9a9a9a"/></svg><div class="abs" style="left:383px;top:255px;width:10px;height:652px;background:#686868"></div><svg style="left:384px;top:934px" width="9" height="5" viewBox="0 0 9 5" ><path d="M0 0.2H8.4L4.2 4.4Z" fill="#9a9a9a"/></svg><div class="abs" style="left:3px;top:943px;width:394px;height:1px;background:#3f3f46"></div><div class="abs" style="left:3px;top:945px;width:91px;height:26px;background:#252526;border-right:1px solid #3f3f46"></div><svg style="left:11.3px;top:949.4px" width="16.51" height="17.78" viewBox="0 0 13 14"><rect x="0" y="0" width="5.3" height="3" fill="#f59a40"/><path d="M2.9 3.2V11.5H4.6M2.9 6.4H4.6" fill="none" stroke="#e8e8e8" stroke-width="1.1"/><rect x="6.2" y="4.9" width="5.3" height="3" fill="#f59a40"/><rect x="6.2" y="9.8" width="5.3" height="3.2" fill="#f59a40"/></svg><div class="t" style="left:31px;top:952px;color:#1580d0">Yapı Ağacı</div><svg style="left:101px;top:950px" width="19" height="18" viewBox="0 0 19 18" ><rect x="0.6" y="0.6" width="14" height="11.4" fill="none" stroke="#9a9a9a" stroke-width="1.1"/><rect x="0.6" y="0.6" width="14" height="2.8" fill="#5a80c8"/><path d="M2.6 6H6M7.4 6H12.6M2.6 8.4H6M7.4 8.4H12.6" stroke="#c8c8c8" stroke-width="1"/><circle cx="13.8" cy="12.8" r="4.4" fill="#4f7cc8"/><circle cx="13.8" cy="12.8" r="1.5" fill="#252526"/><path d="M13.8 7.4V18.2M8.4 12.8H19.2M10 9L17.6 16.6M17.6 9L10 16.6" stroke="#4f7cc8" stroke-width="1.5"/><circle cx="13.8" cy="12.8" r="1.6" fill="#2d2d30"/></svg><div class="t" style="left:123px;top:952px">Cad Object</div><svg style="left:195px;top:950px" width="18" height="18" viewBox="0 0 18 18" ><circle cx="8.6" cy="8.6" r="8.4" fill="#f0643c"/><rect x="7.5" y="3.4" width="2.3" height="7" fill="#2d2d30"/><rect x="7.5" y="11.6" width="2.3" height="2.4" fill="#2d2d30"/></svg><div class="t" style="left:217px;top:952px">Hata Kontrol</div><div class="abs" style="left:2px;top:971px;width:397px;height:1px;background:#3f3f46"></div>
<div class="abs" style="left:402px;top:184px;width:734px;height:2px;background:#3f3f46"></div><div class="abs" style="left:1141px;top:184px;width:777px;height:2px;background:#3f3f46"></div><div class="abs" style="left:402px;top:159px;width:131px;height:27px;background:#3f3f46"></div><div class="abs" style="left:1141px;top:159px;width:148px;height:27px;background:#3f3f46"></div><svg style="left:414px;top:164px" width="19" height="16" viewBox="0 0 19 16" ><path d="M5.4 0.8L1.2 8.2M5.4 0.8L8.4 5.4" fill="none" stroke="#d8d8d8" stroke-width="1.1"/><circle cx="5.6" cy="11.6" r="4.8" fill="none" stroke="#d8d8d8" stroke-width="1.1"/><path d="M8.6 6.4L13.4 4.2L17.6 6V12.4L13 14.8L8.8 13M8.6 6.4L13 8.4L17.6 6M13 8.4V14.8" fill="none" stroke="#d8d8d8" stroke-width="1.1"/></svg><div class="t" style="left:435px;top:166px">3D Bakış</div><svg style="left:501px;top:165px" width="9" height="13" viewBox="0 0 9 13" ><path d="M2.2 0.8H6.6V6.6H2.2ZM0.6 6.8H8.2M4.4 6.8V12.4" fill="none" stroke="#f1f1f1" stroke-width="1.1"/><rect x="5" y="0.8" width="1.6" height="5.8" fill="#f1f1f1"/></svg><svg style="left:516px;top:167px" width="10" height="10" viewBox="0 0 10 10" ><path d="M0.8 0.8L9 9M9 0.8L0.8 9" stroke="#f1f1f1" stroke-width="1.4" fill="none"/></svg><svg style="left:1109px;top:171px" width="8" height="4" viewBox="0 0 8 4" ><path d="M0 0H7.6L3.8 3.8Z" fill="#f1f1f1"/></svg><svg style="left:1124px;top:167px" width="10" height="10" viewBox="0 0 10 10" ><path d="M0.8 0.8L9 9M9 0.8L0.8 9" stroke="#f1f1f1" stroke-width="1.4" fill="none"/></svg><svg style="left:1152px;top:164px" width="19" height="16" viewBox="0 0 19 16" ><path d="M5.4 0.8L1.2 8.2M5.4 0.8L8.4 5.4" fill="none" stroke="#d8d8d8" stroke-width="1.1"/><circle cx="5.6" cy="11.6" r="4.8" fill="none" stroke="#d8d8d8" stroke-width="1.1"/><path d="M8.6 6.4L13.4 4.2L17.6 6V12.4L13 14.8L8.8 13M8.6 6.4L13 8.4L17.6 6M13 8.4V14.8" fill="none" stroke="#d8d8d8" stroke-width="1.1"/></svg><div class="t" style="left:1180px;top:166px">0 Kat Planı</div><svg style="left:1255px;top:167px" width="12" height="9" viewBox="0 0 12 9" ><path d="M11.4 2.2V6.6H5.6V2.2ZM5.4 0.6V8.2M5.4 4.4H0.4" fill="none" stroke="#f1f1f1" stroke-width="1.1"/><rect x="5.6" y="5" width="5.8" height="1.6" fill="#f1f1f1"/></svg><svg style="left:1272px;top:167px" width="10" height="10" viewBox="0 0 10 10" ><path d="M0.8 0.8L9 9M9 0.8L0.8 9" stroke="#f1f1f1" stroke-width="1.4" fill="none"/></svg><svg style="left:1889px;top:171px" width="8" height="4" viewBox="0 0 8 4" ><path d="M0 0H7.6L3.8 3.8Z" fill="#f1f1f1"/></svg><svg style="left:1904px;top:167px" width="10" height="10" viewBox="0 0 10 10" ><path d="M0.8 0.8L9 9M9 0.8L0.8 9" stroke="#f1f1f1" stroke-width="1.4" fill="none"/></svg><div class="abs vp" style="left:403px;top:186px;width:733px;height:786px;border-left:1px solid #9a9a9a;border-right:1px solid #8e8e8e;border-bottom:1px solid #3f3f46"></div><div class="abs vp" style="left:1141px;top:186px;width:777px;height:786px;border-left:1px solid #3f3f46;border-right:1px solid #8a8a8a;border-bottom:1px solid #3f3f46"></div><svg style="left:404px;top:186px;overflow:hidden" width="731" height="784" viewBox="404 186 731 784" fill="none" overflow="hidden"><path d="M386.3 624.4L594.8 746.9" stroke="#9a35c9" stroke-width="1.30"/><path d="M410.5 616.3L619.0 738.8" stroke="#9a35c9" stroke-width="1.30"/><path d="M417.4 614.1L625.9 736.6" stroke="#9a35c9" stroke-width="1.30"/><path d="M444.1 605.2L652.6 727.7" stroke="#9a35c9" stroke-width="1.30"/><path d="M462.2 599.1L670.7 721.6" stroke="#9a35c9" stroke-width="1.30"/><path d="M474.3 595.1L682.8 717.6" stroke="#9a35c9" stroke-width="1.30"/><path d="M582.8 559.0L791.2 681.5" stroke="#9a35c9" stroke-width="1.30"/><path d="M619.6 546.8L828.0 669.3" stroke="#9a35c9" stroke-width="1.30"/><path d="M659.9 533.4L868.4 655.9" stroke="#9a35c9" stroke-width="1.30"/><path d="M696.7 521.1L905.2 643.6" stroke="#9a35c9" stroke-width="1.30"/><path d="M805.1 485.1L1013.6 607.6" stroke="#9a35c9" stroke-width="1.30"/><path d="M817.3 481.0L1025.7 603.5" stroke="#9a35c9" stroke-width="1.30"/><path d="M835.4 475.0L1043.8 597.5" stroke="#9a35c9" stroke-width="1.30"/><path d="M862.2 466.1L1070.7 588.6" stroke="#9a35c9" stroke-width="1.30"/><path d="M869.1 463.8L1077.5 586.3" stroke="#9a35c9" stroke-width="1.30"/><path d="M893.1 455.8L1101.6 578.3" stroke="#9a35c9" stroke-width="1.30"/><path d="M527.7 575.9L738.5 699.8" stroke="#9a35c9" stroke-width="2.80"/><path d="M638.2 539.2L849.0 663.0" stroke="#9a35c9" stroke-width="2.80"/><path d="M749.1 502.3L959.9 626.1" stroke="#9a35c9" stroke-width="2.80"/><path d="M384.5 631.2L908.5 456.9" stroke="#9a35c9" stroke-width="1.30"/><path d="M403.8 642.5L927.7 468.2" stroke="#9a35c9" stroke-width="1.30"/><path d="M418.9 651.4L942.8 477.1" stroke="#9a35c9" stroke-width="1.30"/><path d="M422.5 653.5L946.4 479.2" stroke="#9a35c9" stroke-width="1.30"/><path d="M443.5 665.8L967.4 491.5" stroke="#9a35c9" stroke-width="1.30"/><path d="M481.1 687.9L1005.0 513.6" stroke="#9a35c9" stroke-width="1.30"/><path d="M508.6 704.1L1032.6 529.8" stroke="#9a35c9" stroke-width="1.30"/><path d="M518.5 709.9L1042.4 535.6" stroke="#9a35c9" stroke-width="1.30"/><path d="M545.8 725.9L1069.7 551.6" stroke="#9a35c9" stroke-width="1.30"/><path d="M557.8 733.0L1081.8 558.7" stroke="#9a35c9" stroke-width="1.30"/><path d="M579.2 745.6L1103.1 571.2" stroke="#9a35c9" stroke-width="1.30"/><path d="M554.4 732.9L1082.1 557.3" stroke="#9a35c9" stroke-width="1.30"/><path d="M595.6 719.8L1082.8 557.7" stroke="#9a35c9" stroke-width="2.60"/><path d="M389.0 625.6L896.1 456.9" stroke="#f01414" stroke-width="2.60"/><path d="M593.0 745.5L1100.1 576.8" stroke="#f01414" stroke-width="2.00"/><path d="M388.4 630.3L582.3 744.2" stroke="#f01414" stroke-width="3.00"/><path d="M906.8 457.9L1100.6 571.7" stroke="#f01414" stroke-width="3.00"/><path d="M393.8 628.4L900.2 459.9L903.4 461.8L397.0 630.3Z" fill="#ff00ff"/><path d="M397.0 630.3L903.4 461.8" stroke="#ffff00" stroke-width="1.10"/><path d="M393.8 628.4L900.2 459.9" stroke="#00ffff" stroke-width="0.80"/><path d="M394.6 628.9L901.1 460.4" stroke="#ffd0ff" stroke-width="0.70"/><path d="M393.9 628.5L398.0 627.1L569.5 727.9L565.4 729.2Z" fill="#ff00ff"/><path d="M393.9 628.5L565.4 729.2" stroke="#ffff00" stroke-width="1.10"/><path d="M398.0 627.1L569.5 727.9" stroke="#00ffff" stroke-width="0.80"/><path d="M396.9 627.5L568.4 728.2" stroke="#ffd0ff" stroke-width="0.70"/><path d="M449.8 656.5L451.6 655.9L459.0 660.3L457.2 660.9Z" fill="#f01414"/><path d="M444.6 658.2L449.8 656.5L457.2 660.9L452.0 662.6Z" fill="#ff00ff"/><path d="M444.6 658.2L452.0 662.6" stroke="#ffff00" stroke-width="1.10"/><path d="M449.8 656.5L457.2 660.9" stroke="#00ffff" stroke-width="0.80"/><path d="M448.7 656.9L456.1 661.3" stroke="#ffd0ff" stroke-width="0.70"/><path d="M490.9 680.7L492.7 680.1L500.7 684.8L498.9 685.4Z" fill="#f01414"/><path d="M485.7 682.4L490.9 680.7L498.9 685.4L493.7 687.1Z" fill="#ff00ff"/><path d="M485.7 682.4L493.7 687.1" stroke="#ffff00" stroke-width="1.10"/><path d="M490.9 680.7L498.9 685.4" stroke="#00ffff" stroke-width="0.80"/><path d="M489.8 681.0L497.8 685.7" stroke="#ffd0ff" stroke-width="0.70"/><path d="M528.3 702.7L530.1 702.1L538.7 707.1L536.9 707.7Z" fill="#f01414"/><path d="M523.1 704.4L528.3 702.7L536.9 707.7L531.7 709.4Z" fill="#ff00ff"/><path d="M523.1 704.4L531.7 709.4" stroke="#ffff00" stroke-width="1.10"/><path d="M528.3 702.7L536.9 707.7" stroke="#00ffff" stroke-width="0.80"/><path d="M527.2 703.0L535.8 708.1" stroke="#ffd0ff" stroke-width="0.70"/><path d="M567.4 728.6L590.9 732.5L616.3 731.8" fill="none" stroke="#ffff00" stroke-width="5.40"/><path d="M567.4 728.6L590.9 732.5L616.3 731.8" fill="none" stroke="#00ffff" stroke-width="3.75"/><path d="M567.4 728.6L590.9 732.5L616.3 731.8" fill="none" stroke="#ff00ff" stroke-width="2.55"/><path d="M557.6 727.8L569.9 731.3" stroke="#9a35c9" stroke-width="1.00"/><path d="M581.6 735.0L600.8 736.1" stroke="#9a35c9" stroke-width="1.00"/><path d="M421.0 622.3L425.4 620.8L443.9 631.7L439.5 633.2Z" fill="#ff00ff"/><path d="M421.0 622.3L439.5 633.2" stroke="#ffff00" stroke-width="1.10"/><path d="M425.4 620.8L443.9 631.7" stroke="#00ffff" stroke-width="0.80"/><path d="M424.3 621.2L442.8 632.1" stroke="#ffd0ff" stroke-width="0.70"/><path d="M450.4 612.5L454.0 611.3L474.8 623.6L471.2 624.8Z" fill="#ff00ff"/><path d="M450.4 612.5L471.2 624.8" stroke="#ffff00" stroke-width="1.10"/><path d="M454.0 611.3L474.8 623.6" stroke="#00ffff" stroke-width="0.80"/><path d="M452.9 611.7L473.7 623.9" stroke="#ffd0ff" stroke-width="0.70"/><path d="M482.4 601.9L487.5 600.2L503.4 609.6L498.4 611.2Z" fill="#ff00ff"/><path d="M482.4 601.9L498.4 611.2" stroke="#ffff00" stroke-width="1.10"/><path d="M487.5 600.2L503.4 609.6" stroke="#00ffff" stroke-width="0.80"/><path d="M486.4 600.6L502.3 609.9" stroke="#ffd0ff" stroke-width="0.70"/><path d="M416.2 641.6L445.1 632.0L446.4 632.8L417.6 642.4Z" fill="#f01414"/><path d="M413.0 639.7L441.8 630.1L445.1 632.0L416.2 641.6Z" fill="#ff00ff"/><path d="M416.2 641.6L445.1 632.0" stroke="#ffff00" stroke-width="1.10"/><path d="M413.0 639.7L441.8 630.1" stroke="#00ffff" stroke-width="0.80"/><path d="M413.8 640.1L442.6 630.6" stroke="#ffd0ff" stroke-width="0.70"/><path d="M448.7 632.3L468.3 625.7L469.7 626.5L450.1 633.0Z" fill="#f01414"/><path d="M443.8 629.4L463.5 622.9L468.3 625.7L448.7 632.3Z" fill="#ff00ff"/><path d="M448.7 632.3L468.3 625.7" stroke="#ffff00" stroke-width="1.10"/><path d="M443.8 629.4L463.5 622.9" stroke="#00ffff" stroke-width="0.80"/><path d="M444.7 629.9L464.3 623.3" stroke="#ffd0ff" stroke-width="0.70"/><path d="M465.8 622.1L495.6 612.2L498.9 614.1L469.1 624.0Z" fill="#ff00ff"/><path d="M469.1 624.0L498.9 614.1" stroke="#ffff00" stroke-width="1.10"/><path d="M465.8 622.1L495.6 612.2" stroke="#00ffff" stroke-width="0.80"/><path d="M466.6 622.6L496.4 612.7" stroke="#ffd0ff" stroke-width="0.70"/><path d="M506.3 608.6L549.5 594.2L552.8 596.2L509.6 610.5Z" fill="#ff00ff"/><path d="M509.6 610.5L552.8 596.2" stroke="#ffff00" stroke-width="1.10"/><path d="M506.3 608.6L549.5 594.2" stroke="#00ffff" stroke-width="0.80"/><path d="M507.1 609.1L550.3 594.7" stroke="#ffd0ff" stroke-width="0.70"/><path d="M503.7 616.9L515.4 613.0L517.0 614.0L505.2 617.9Z" fill="#f01414"/><path d="M495.6 612.2L506.3 608.6L514.4 613.4L503.7 616.9Z" fill="#ff00ff" stroke="#ffff00" stroke-width="1.20"/><path d="M499.3 613.4L508.0 610.5" stroke="#ffa8ff" stroke-width="0.70"/><path d="M502.0 615.0L510.7 612.1" stroke="#ffa8ff" stroke-width="0.70"/><path d="M557.6 599.0L569.6 595.0L571.2 595.9L559.2 599.9Z" fill="#f01414"/><path d="M549.5 594.2L560.5 590.6L568.6 595.4L557.6 599.0Z" fill="#ff00ff" stroke="#ffff00" stroke-width="1.20"/><path d="M553.2 595.5L562.2 592.5" stroke="#ffa8ff" stroke-width="0.70"/><path d="M555.9 597.1L564.9 594.1" stroke="#ffa8ff" stroke-width="0.70"/><path d="M466.9 643.0L486.5 636.4L487.9 637.2L468.2 643.7Z" fill="#f01414"/><path d="M462.6 640.4L482.3 633.9L486.5 636.4L466.9 643.0Z" fill="#ff00ff"/><path d="M466.9 643.0L486.5 636.4" stroke="#ffff00" stroke-width="1.10"/><path d="M462.6 640.4L482.3 633.9" stroke="#00ffff" stroke-width="0.80"/><path d="M463.5 640.9L483.1 634.4" stroke="#ffd0ff" stroke-width="0.70"/><path d="M482.9 652.3L502.5 645.8L503.9 646.6L484.2 653.1Z" fill="#f01414"/><path d="M478.6 649.8L498.3 643.3L502.5 645.8L482.9 652.3Z" fill="#ff00ff"/><path d="M482.9 652.3L502.5 645.8" stroke="#ffff00" stroke-width="1.10"/><path d="M478.6 649.8L498.3 643.3" stroke="#00ffff" stroke-width="0.80"/><path d="M479.5 650.3L499.1 643.8" stroke="#ffd0ff" stroke-width="0.70"/><path d="M416.1 619.4L426.4 616.0L427.8 616.8L417.5 620.3Z" fill="#f01414"/><path d="M438.7 611.9L449.0 608.4L450.5 609.3L440.2 612.7Z" fill="#f01414"/><path d="M474.4 600.0L485.4 596.3L486.8 597.2L475.9 600.8Z" fill="#f01414"/><path d="M600.5 576.8L630.6 566.8L661.7 585.0L631.5 595.1Z" fill="none" stroke="#f01414" stroke-width="1.20"/><path d="M589.2 567.8L651.6 547.0L655.9 549.6L593.5 570.3Z" fill="#ff00ff"/><path d="M593.5 570.3L655.9 549.6" stroke="#ffff00" stroke-width="1.10"/><path d="M589.2 567.8L651.6 547.0" stroke="#00ffff" stroke-width="0.80"/><path d="M590.0 568.3L652.4 547.5" stroke="#ffd0ff" stroke-width="0.70"/><path d="M649.5 551.0L655.2 549.1L676.2 561.5L670.6 563.4Z" fill="#ff00ff"/><path d="M649.5 551.0L670.6 563.4" stroke="#ffff00" stroke-width="1.10"/><path d="M655.2 549.1L676.2 561.5" stroke="#00ffff" stroke-width="0.80"/><path d="M654.1 549.5L675.1 561.9" stroke="#ffd0ff" stroke-width="0.70"/><path d="M619.2 584.4L680.5 564.0L681.8 564.8L620.5 585.2Z" fill="#f01414"/><path d="M615.0 581.9L676.2 561.5L680.5 564.0L619.2 584.4Z" fill="#ff00ff"/><path d="M619.2 584.4L680.5 564.0" stroke="#ffff00" stroke-width="1.10"/><path d="M615.0 581.9L676.2 561.5" stroke="#00ffff" stroke-width="0.80"/><path d="M615.8 582.4L677.1 562.0" stroke="#ffd0ff" stroke-width="0.70"/><path d="M604.0 576.1L609.0 574.4L639.0 592.1L634.0 593.7Z" fill="#ff00ff"/><path d="M604.0 576.1L634.0 593.7" stroke="#ffff00" stroke-width="1.10"/><path d="M609.0 574.4L639.0 592.1" stroke="#00ffff" stroke-width="0.80"/><path d="M607.9 574.8L637.9 592.4" stroke="#ffd0ff" stroke-width="0.70"/><path d="M613.9 577.3L633.3 570.8L634.6 571.6L615.2 578.1Z" fill="#f01414"/><path d="M609.0 574.4L628.4 568.0L633.3 570.8L613.9 577.3Z" fill="#ff00ff"/><path d="M613.9 577.3L633.3 570.8" stroke="#ffff00" stroke-width="1.10"/><path d="M609.0 574.4L628.4 568.0" stroke="#00ffff" stroke-width="0.80"/><path d="M609.8 574.9L629.2 568.5" stroke="#ffd0ff" stroke-width="0.70"/><path d="M639.0 592.1L658.4 585.6L659.8 586.4L640.4 592.9Z" fill="#f01414"/><path d="M634.2 589.2L653.6 582.8L658.4 585.6L639.0 592.1Z" fill="#ff00ff"/><path d="M639.0 592.1L658.4 585.6" stroke="#ffff00" stroke-width="1.10"/><path d="M634.2 589.2L653.6 582.8" stroke="#00ffff" stroke-width="0.80"/><path d="M635.0 589.7L654.4 583.3" stroke="#ffd0ff" stroke-width="0.70"/><path d="M722.4 625.3L728.1 623.4L773.6 650.1L767.8 652.0Z" fill="#ff00ff"/><path d="M722.4 625.3L767.8 652.0" stroke="#ffff00" stroke-width="1.10"/><path d="M728.1 623.4L773.6 650.1" stroke="#00ffff" stroke-width="0.80"/><path d="M727.0 623.8L772.5 650.5" stroke="#ffd0ff" stroke-width="0.70"/><path d="M755.9 614.2L761.6 612.3L807.1 639.0L801.4 640.9Z" fill="#ff00ff"/><path d="M755.9 614.2L801.4 640.9" stroke="#ffff00" stroke-width="1.10"/><path d="M761.6 612.3L807.1 639.0" stroke="#00ffff" stroke-width="0.80"/><path d="M760.5 612.6L806.0 639.3" stroke="#ffd0ff" stroke-width="0.70"/><path d="M755.7 626.5L766.4 623.0L767.8 623.8L757.0 627.3Z" fill="#f01414"/><path d="M750.9 623.7L761.6 620.2L766.4 623.0L755.7 626.5Z" fill="#ff00ff"/><path d="M755.7 626.5L766.4 623.0" stroke="#ffff00" stroke-width="1.10"/><path d="M750.9 623.7L761.6 620.2" stroke="#00ffff" stroke-width="0.80"/><path d="M751.8 624.2L762.5 620.7" stroke="#ffd0ff" stroke-width="0.70"/><path d="M799.5 652.3L819.4 645.7L820.7 646.5L800.8 653.1Z" fill="#f01414"/><path d="M794.6 649.4L814.5 642.8L819.4 645.7L799.5 652.3Z" fill="#ff00ff"/><path d="M799.5 652.3L819.4 645.7" stroke="#ffff00" stroke-width="1.10"/><path d="M794.6 649.4L814.5 642.8" stroke="#00ffff" stroke-width="0.80"/><path d="M795.5 649.9L815.4 643.3" stroke="#ffd0ff" stroke-width="0.70"/><path d="M670.1 715.2L681.1 711.6L682.9 712.6L671.9 716.3Z" fill="#f01414"/><path d="M725.0 696.9L736.0 693.3L737.8 694.3L726.8 698.0Z" fill="#f01414"/><path d="M778.6 679.1L789.5 675.5L791.3 676.5L780.4 680.2Z" fill="#f01414"/><path d="M895.8 461.5L899.9 460.1L1071.4 560.9L1067.3 562.3Z" fill="#ff00ff"/><path d="M895.8 461.5L1067.3 562.3" stroke="#ffff00" stroke-width="1.10"/><path d="M899.9 460.1L1071.4 560.9" stroke="#00ffff" stroke-width="0.80"/><path d="M898.8 460.5L1070.3 561.3" stroke="#ffd0ff" stroke-width="0.70"/><path d="M943.6 492.2L945.4 491.6L952.8 496.0L951.0 496.6Z" fill="#f01414"/><path d="M945.4 491.6L950.6 489.9L958.0 494.3L952.8 496.0Z" fill="#ff00ff"/><path d="M945.4 491.6L952.8 496.0" stroke="#ffff00" stroke-width="1.10"/><path d="M950.6 489.9L958.0 494.3" stroke="#00ffff" stroke-width="0.80"/><path d="M949.5 490.3L956.9 494.6" stroke="#ffd0ff" stroke-width="0.70"/><path d="M984.7 516.4L986.5 515.8L994.5 520.5L992.7 521.1Z" fill="#f01414"/><path d="M986.5 515.8L991.7 514.1L999.7 518.7L994.5 520.5Z" fill="#ff00ff"/><path d="M986.5 515.8L994.5 520.5" stroke="#ffff00" stroke-width="1.10"/><path d="M991.7 514.1L999.7 518.7" stroke="#00ffff" stroke-width="0.80"/><path d="M990.6 514.4L998.6 519.1" stroke="#ffd0ff" stroke-width="0.70"/><path d="M1022.1 538.4L1023.9 537.8L1032.5 542.8L1030.7 543.4Z" fill="#f01414"/><path d="M1023.9 537.8L1029.1 536.1L1037.7 541.1L1032.5 542.8Z" fill="#ff00ff"/><path d="M1023.9 537.8L1032.5 542.8" stroke="#ffff00" stroke-width="1.10"/><path d="M1029.1 536.1L1037.7 541.1" stroke="#00ffff" stroke-width="0.80"/><path d="M1028.0 536.4L1036.6 541.5" stroke="#ffd0ff" stroke-width="0.70"/><path d="M1069.3 561.6L1071.5 572.6L1062.8 583.2" fill="none" stroke="#ffff00" stroke-width="5.40"/><path d="M1069.3 561.6L1071.5 572.6L1062.8 583.2" fill="none" stroke="#00ffff" stroke-width="3.75"/><path d="M1069.3 561.6L1071.5 572.6L1062.8 583.2" fill="none" stroke="#ff00ff" stroke-width="2.55"/><path d="M1070.4 557.2L1074.6 563.4" stroke="#9a35c9" stroke-width="1.00"/><path d="M1079.3 569.4L1076.6 577.8" stroke="#9a35c9" stroke-width="1.00"/><path d="M874.6 471.4L879.0 469.9L897.5 480.8L893.1 482.3Z" fill="#ff00ff"/><path d="M874.6 471.4L893.1 482.3" stroke="#ffff00" stroke-width="1.10"/><path d="M879.0 469.9L897.5 480.8" stroke="#00ffff" stroke-width="0.80"/><path d="M877.9 470.3L896.4 481.2" stroke="#ffd0ff" stroke-width="0.70"/><path d="M846.1 480.9L849.6 479.7L870.5 491.9L866.9 493.1Z" fill="#ff00ff"/><path d="M846.1 480.9L866.9 493.1" stroke="#ffff00" stroke-width="1.10"/><path d="M849.6 479.7L870.5 491.9" stroke="#00ffff" stroke-width="0.80"/><path d="M848.5 480.1L869.4 492.3" stroke="#ffd0ff" stroke-width="0.70"/><path d="M812.6 492.0L817.6 490.4L833.5 499.7L828.5 501.4Z" fill="#ff00ff"/><path d="M812.6 492.0L828.5 501.4" stroke="#ffff00" stroke-width="1.10"/><path d="M817.6 490.4L833.5 499.7" stroke="#00ffff" stroke-width="0.80"/><path d="M816.5 490.7L832.4 500.1" stroke="#ffd0ff" stroke-width="0.70"/><path d="M893.4 482.8L922.2 473.2L923.6 474.0L894.8 483.6Z" fill="#f01414"/><path d="M890.1 480.9L919.0 471.3L922.2 473.2L893.4 482.8Z" fill="#ff00ff"/><path d="M893.4 482.8L922.2 473.2" stroke="#ffff00" stroke-width="1.10"/><path d="M890.1 480.9L919.0 471.3" stroke="#00ffff" stroke-width="0.80"/><path d="M891.0 481.4L919.8 471.8" stroke="#ffd0ff" stroke-width="0.70"/><path d="M873.3 491.0L893.0 484.5L894.3 485.2L874.7 491.8Z" fill="#f01414"/><path d="M868.5 488.1L888.1 481.6L893.0 484.5L873.3 491.0Z" fill="#ff00ff"/><path d="M873.3 491.0L893.0 484.5" stroke="#ffff00" stroke-width="1.10"/><path d="M868.5 488.1L888.1 481.6" stroke="#00ffff" stroke-width="0.80"/><path d="M869.3 488.6L888.9 482.1" stroke="#ffd0ff" stroke-width="0.70"/><path d="M836.3 498.8L866.1 488.9L869.4 490.8L839.6 500.7Z" fill="#ff00ff"/><path d="M839.6 500.7L869.4 490.8" stroke="#ffff00" stroke-width="1.10"/><path d="M836.3 498.8L866.1 488.9" stroke="#00ffff" stroke-width="0.80"/><path d="M837.2 499.3L866.9 489.4" stroke="#ffd0ff" stroke-width="0.70"/><path d="M782.4 516.7L825.6 502.4L828.9 504.3L785.7 518.7Z" fill="#ff00ff"/><path d="M785.7 518.7L828.9 504.3" stroke="#ffff00" stroke-width="1.10"/><path d="M782.4 516.7L825.6 502.4" stroke="#00ffff" stroke-width="0.80"/><path d="M783.2 517.2L826.5 502.8" stroke="#ffd0ff" stroke-width="0.70"/><path d="M833.8 507.1L845.5 503.2L847.0 504.1L835.3 508.0Z" fill="#f01414"/><path d="M825.6 502.4L836.3 498.8L844.5 503.6L833.8 507.1Z" fill="#ff00ff" stroke="#ffff00" stroke-width="1.20"/><path d="M829.4 503.6L838.0 500.7" stroke="#ffa8ff" stroke-width="0.70"/><path d="M832.1 505.2L840.7 502.3" stroke="#ffa8ff" stroke-width="0.70"/><path d="M779.5 525.2L791.6 521.2L793.1 522.1L781.1 526.1Z" fill="#f01414"/><path d="M771.4 520.4L782.4 516.7L790.5 521.5L779.5 525.2Z" fill="#ff00ff" stroke="#ffff00" stroke-width="1.20"/><path d="M775.2 521.6L784.1 518.7" stroke="#ffa8ff" stroke-width="0.70"/><path d="M777.9 523.2L786.8 520.3" stroke="#ffa8ff" stroke-width="0.70"/><path d="M891.5 501.7L911.2 495.2L912.5 495.9L892.9 502.5Z" fill="#f01414"/><path d="M887.3 499.2L906.9 492.6L911.2 495.2L891.5 501.7Z" fill="#ff00ff"/><path d="M891.5 501.7L911.2 495.2" stroke="#ffff00" stroke-width="1.10"/><path d="M887.3 499.2L906.9 492.6" stroke="#00ffff" stroke-width="0.80"/><path d="M888.1 499.7L907.7 493.1" stroke="#ffd0ff" stroke-width="0.70"/><path d="M907.5 511.1L927.1 504.5L928.5 505.3L908.9 511.9Z" fill="#f01414"/><path d="M903.3 508.6L922.9 502.0L927.1 504.5L907.5 511.1Z" fill="#ff00ff"/><path d="M907.5 511.1L927.1 504.5" stroke="#ffff00" stroke-width="1.10"/><path d="M903.3 508.6L922.9 502.0" stroke="#00ffff" stroke-width="0.80"/><path d="M904.1 509.1L923.7 502.5" stroke="#ffd0ff" stroke-width="0.70"/><path d="M863.8 470.5L874.1 467.0L875.5 467.9L865.2 471.3Z" fill="#f01414"/><path d="M841.1 478.0L851.4 474.6L852.9 475.4L842.6 478.8Z" fill="#f01414"/><path d="M804.8 490.1L815.7 486.4L817.2 487.3L806.2 490.9Z" fill="#f01414"/><path d="M700.2 543.6L730.4 533.6L761.5 551.8L731.3 561.9Z" fill="none" stroke="#f01414" stroke-width="1.20"/><path d="M651.6 547.0L713.9 526.3L718.3 528.8L655.9 549.6Z" fill="#ff00ff"/><path d="M655.9 549.6L718.3 528.8" stroke="#ffff00" stroke-width="1.10"/><path d="M651.6 547.0L713.9 526.3" stroke="#00ffff" stroke-width="0.80"/><path d="M652.4 547.5L714.8 526.8" stroke="#ffd0ff" stroke-width="0.70"/><path d="M655.2 549.1L660.8 547.3L681.9 559.7L676.2 561.5Z" fill="#ff00ff"/><path d="M655.2 549.1L676.2 561.5" stroke="#ffff00" stroke-width="1.10"/><path d="M660.8 547.3L681.9 559.7" stroke="#00ffff" stroke-width="0.80"/><path d="M659.7 547.6L680.8 560.0" stroke="#ffd0ff" stroke-width="0.70"/><path d="M680.5 564.0L741.7 543.6L743.1 544.4L681.8 564.8Z" fill="#f01414"/><path d="M676.2 561.5L737.5 541.1L741.7 543.6L680.5 564.0Z" fill="#ff00ff"/><path d="M680.5 564.0L741.7 543.6" stroke="#ffff00" stroke-width="1.10"/><path d="M676.2 561.5L737.5 541.1" stroke="#00ffff" stroke-width="0.80"/><path d="M677.1 562.0L738.3 541.6" stroke="#ffd0ff" stroke-width="0.70"/><path d="M722.9 536.5L727.9 534.9L757.9 552.5L752.9 554.2Z" fill="#ff00ff"/><path d="M722.9 536.5L752.9 554.2" stroke="#ffff00" stroke-width="1.10"/><path d="M727.9 534.9L757.9 552.5" stroke="#00ffff" stroke-width="0.80"/><path d="M726.8 535.2L756.8 552.9" stroke="#ffd0ff" stroke-width="0.70"/><path d="M708.4 545.9L727.8 539.4L729.1 540.2L709.7 546.7Z" fill="#f01414"/><path d="M703.5 543.0L722.9 536.5L727.8 539.4L708.4 545.9Z" fill="#ff00ff"/><path d="M708.4 545.9L727.8 539.4" stroke="#ffff00" stroke-width="1.10"/><path d="M703.5 543.0L722.9 536.5" stroke="#00ffff" stroke-width="0.80"/><path d="M704.3 543.5L723.7 537.0" stroke="#ffd0ff" stroke-width="0.70"/><path d="M733.5 560.6L752.9 554.2L754.3 555.0L734.8 561.4Z" fill="#f01414"/><path d="M728.7 557.8L748.1 551.3L752.9 554.2L733.5 560.6Z" fill="#ff00ff"/><path d="M733.5 560.6L752.9 554.2" stroke="#ffff00" stroke-width="1.10"/><path d="M728.7 557.8L748.1 551.3" stroke="#00ffff" stroke-width="0.80"/><path d="M729.5 558.3L748.9 551.8" stroke="#ffd0ff" stroke-width="0.70"/><path d="M796.3 600.7L802.1 598.8L847.6 625.5L841.8 627.4Z" fill="#ff00ff"/><path d="M796.3 600.7L841.8 627.4" stroke="#ffff00" stroke-width="1.10"/><path d="M802.1 598.8L847.6 625.5" stroke="#00ffff" stroke-width="0.80"/><path d="M801.0 599.2L846.5 625.9" stroke="#ffd0ff" stroke-width="0.70"/><path d="M762.9 611.9L768.6 610.0L814.0 636.7L808.3 638.6Z" fill="#ff00ff"/><path d="M762.9 611.9L808.3 638.6" stroke="#ffff00" stroke-width="1.10"/><path d="M768.6 610.0L814.0 636.7" stroke="#00ffff" stroke-width="0.80"/><path d="M767.5 610.3L812.9 637.0" stroke="#ffd0ff" stroke-width="0.70"/><path d="M784.8 616.9L795.5 613.3L796.8 614.1L786.1 617.7Z" fill="#f01414"/><path d="M780.0 614.1L790.7 610.5L795.5 613.3L784.8 616.9Z" fill="#ff00ff"/><path d="M784.8 616.9L795.5 613.3" stroke="#ffff00" stroke-width="1.10"/><path d="M780.0 614.1L790.7 610.5" stroke="#00ffff" stroke-width="0.80"/><path d="M780.8 614.5L791.6 611.0" stroke="#ffd0ff" stroke-width="0.70"/><path d="M819.4 645.7L839.3 639.0L840.6 639.8L820.7 646.5Z" fill="#f01414"/><path d="M814.5 642.8L834.4 636.2L839.3 639.0L819.4 645.7Z" fill="#ff00ff"/><path d="M819.4 645.7L839.3 639.0" stroke="#ffff00" stroke-width="1.10"/><path d="M814.5 642.8L834.4 636.2" stroke="#00ffff" stroke-width="0.80"/><path d="M815.4 643.3L835.3 636.7" stroke="#ffd0ff" stroke-width="0.70"/><path d="M1001.0 605.1L1011.9 601.5L1013.7 602.5L1002.8 606.2Z" fill="#f01414"/><path d="M946.0 623.4L957.0 619.8L958.8 620.8L947.8 624.5Z" fill="#f01414"/><path d="M892.5 641.2L903.4 637.6L905.2 638.6L894.3 642.3Z" fill="#f01414"/><path d="M763.3 649.4L843.1 622.9L847.6 625.5L767.8 652.0Z" fill="#ff00ff"/><path d="M767.8 652.0L847.6 625.5" stroke="#ffff00" stroke-width="1.10"/><path d="M763.3 649.4L843.1 622.9" stroke="#00ffff" stroke-width="0.80"/><path d="M764.2 649.9L843.9 623.4" stroke="#ffd0ff" stroke-width="0.70"/><path d="M767.4 653.1L720.2 625.4L802.8 597.9L850.0 625.6Z" fill="none" stroke="#f01414" stroke-width="1.20"/><path d="M761.4 624.7L789.8 615.2L797.9 619.9L769.5 629.4Z" fill="none" stroke="#f01414" stroke-width="1.20"/><path d="M830.0 662.0L852.0 654.7L853.8 655.8L831.8 663.1Z" fill="#f01414"/><path d="M614.7 731.0L1061.7 582.3L1064.5 584.0L617.5 732.7Z" fill="#ff00ff"/><path d="M617.5 732.7L1064.5 584.0" stroke="#ffff00" stroke-width="1.10"/><path d="M614.7 731.0L1061.7 582.3" stroke="#00ffff" stroke-width="0.80"/><path d="M615.5 731.5L1062.5 582.8" stroke="#ffd0ff" stroke-width="0.70"/><path d="M527.6 668.5L529.6 667.8L538.4 672.9L536.3 673.6Z" fill="#f01414"/><path d="M516.6 672.1L527.6 668.5L535.5 673.2L524.5 676.8Z" fill="#ff00ff" stroke="#ffff00" stroke-width="1.20"/><path d="M520.3 673.4L529.2 670.4" stroke="#ffa8ff" stroke-width="0.70"/><path d="M522.9 674.9L531.8 671.9" stroke="#ffa8ff" stroke-width="0.70"/><path d="M565.0 690.5L567.0 689.8L576.4 695.3L574.3 696.0Z" fill="#f01414"/><path d="M554.0 694.1L565.0 690.5L573.6 695.5L562.6 699.2Z" fill="#ff00ff" stroke="#ffff00" stroke-width="1.20"/><path d="M557.9 695.5L566.8 692.5" stroke="#ffa8ff" stroke-width="0.70"/><path d="M560.8 697.2L569.7 694.2" stroke="#ffa8ff" stroke-width="0.70"/><path d="M600.6 711.4L602.7 710.7L611.7 716.0L609.6 716.7Z" fill="#f01414"/><path d="M589.6 715.1L600.6 711.4L608.8 716.2L597.9 719.9Z" fill="#ff00ff" stroke="#ffff00" stroke-width="1.20"/><path d="M593.4 716.3L602.3 713.4" stroke="#ffa8ff" stroke-width="0.70"/><path d="M596.1 717.9L605.1 715.0" stroke="#ffa8ff" stroke-width="0.70"/><path d="M649.0 702.9L661.1 698.9L662.6 699.8L650.6 703.8Z" fill="#f01414"/><path d="M640.8 698.0L651.8 694.4L660.0 699.2L649.0 702.9Z" fill="#ff00ff" stroke="#ffff00" stroke-width="1.20"/><path d="M644.6 699.3L653.5 696.3" stroke="#ffa8ff" stroke-width="0.70"/><path d="M647.3 700.9L656.3 697.9" stroke="#ffa8ff" stroke-width="0.70"/><path d="M704.0 684.6L716.0 680.6L717.6 681.5L705.6 685.5Z" fill="#f01414"/><path d="M695.8 679.7L706.8 676.1L715.0 680.9L704.0 684.6Z" fill="#ff00ff" stroke="#ffff00" stroke-width="1.20"/><path d="M699.6 681.0L708.5 678.0" stroke="#ffa8ff" stroke-width="0.70"/><path d="M702.3 682.6L711.2 679.7" stroke="#ffa8ff" stroke-width="0.70"/><path d="M757.5 666.8L769.5 662.8L771.1 663.7L759.1 667.7Z" fill="#f01414"/><path d="M749.3 661.9L760.3 658.3L768.5 663.1L757.5 666.8Z" fill="#ff00ff" stroke="#ffff00" stroke-width="1.20"/><path d="M753.1 663.2L762.0 660.2" stroke="#ffa8ff" stroke-width="0.70"/><path d="M755.8 664.8L764.7 661.9" stroke="#ffa8ff" stroke-width="0.70"/><path d="M528.2 633.0L539.2 629.3L547.4 634.2L536.4 637.8Z" fill="none" stroke="#f01414" stroke-width="1.00"/><path d="M530.3 633.1L541.3 629.5L549.5 634.3L538.6 637.9Z" fill="none" stroke="#ffff00" stroke-width="1.05"/><path d="M583.1 614.7L594.1 611.0L602.3 615.9L591.4 619.5Z" fill="none" stroke="#f01414" stroke-width="1.00"/><path d="M585.3 614.8L596.3 611.2L604.5 616.0L593.5 619.7Z" fill="none" stroke="#ffff00" stroke-width="1.05"/><path d="M636.7 596.9L647.6 593.2L655.9 598.1L644.9 601.7Z" fill="none" stroke="#f01414" stroke-width="1.00"/><path d="M638.8 597.0L649.8 593.4L658.0 598.2L647.1 601.9Z" fill="none" stroke="#ffff00" stroke-width="1.05"/><path d="M750.6 559.0L761.6 555.3L769.8 560.2L758.8 563.8Z" fill="none" stroke="#f01414" stroke-width="1.00"/><path d="M752.7 559.1L763.7 555.5L771.9 560.3L761.0 564.0Z" fill="none" stroke="#ffff00" stroke-width="1.05"/><path d="M804.5 541.0L815.5 537.4L823.7 542.2L812.7 545.9Z" fill="none" stroke="#f01414" stroke-width="1.00"/><path d="M806.7 541.2L817.7 537.5L825.9 542.4L814.9 546.0Z" fill="none" stroke="#ffff00" stroke-width="1.05"/><path d="M859.0 522.9L870.0 519.3L878.2 524.1L867.2 527.7Z" fill="none" stroke="#f01414" stroke-width="1.00"/><path d="M861.2 523.0L872.1 519.4L880.4 524.2L869.4 527.9Z" fill="none" stroke="#ffff00" stroke-width="1.05"/><path d="M688.1 579.8L699.1 576.1L707.3 580.9L696.4 584.6Z" fill="none" stroke="#f01414" stroke-width="1.00"/><path d="M690.3 579.9L701.3 576.2L709.5 581.1L698.5 584.7Z" fill="none" stroke="#ffff00" stroke-width="1.05"/><path d="M699.1 576.1L710.1 572.5L718.3 577.3L707.3 580.9Z" fill="none" stroke="#f01414" stroke-width="1.00"/><path d="M701.3 576.2L712.3 572.6L720.5 577.4L709.5 581.1Z" fill="none" stroke="#ffff00" stroke-width="1.05"/><path d="M565.8 655.1L576.8 651.4L585.0 656.3L574.0 659.9Z" fill="none" stroke="#f01414" stroke-width="1.00"/><path d="M568.0 655.2L579.0 651.6L587.2 656.4L576.2 660.1Z" fill="none" stroke="#ffff00" stroke-width="1.05"/><path d="M620.8 636.8L631.8 633.2L640.0 638.0L629.0 641.6Z" fill="none" stroke="#f01414" stroke-width="1.00"/><path d="M622.9 636.9L633.9 633.3L642.1 638.1L631.2 641.8Z" fill="none" stroke="#ffff00" stroke-width="1.05"/><path d="M674.3 619.0L685.3 615.3L693.5 620.2L682.5 623.8Z" fill="none" stroke="#f01414" stroke-width="1.00"/><path d="M676.5 619.1L687.4 615.5L695.7 620.3L684.7 624.0Z" fill="none" stroke="#ffff00" stroke-width="1.05"/><path d="M788.2 581.1L799.2 577.4L807.4 582.3L796.4 585.9Z" fill="none" stroke="#f01414" stroke-width="1.00"/><path d="M790.4 581.2L801.3 577.6L809.6 582.4L798.6 586.1Z" fill="none" stroke="#ffff00" stroke-width="1.05"/><path d="M842.1 563.2L853.1 559.5L861.3 564.3L850.4 568.0Z" fill="none" stroke="#f01414" stroke-width="1.00"/><path d="M844.3 563.3L855.3 559.6L863.5 564.5L852.5 568.1Z" fill="none" stroke="#ffff00" stroke-width="1.05"/><path d="M896.6 545.0L907.6 541.4L915.8 546.2L904.9 549.9Z" fill="none" stroke="#f01414" stroke-width="1.00"/><path d="M898.8 545.2L909.8 541.5L918.0 546.3L907.0 550.0Z" fill="none" stroke="#ffff00" stroke-width="1.05"/><path d="M725.8 601.9L736.7 598.2L745.0 603.1L734.0 606.7Z" fill="none" stroke="#f01414" stroke-width="1.00"/><path d="M727.9 602.0L738.9 598.4L747.1 603.2L736.2 606.8Z" fill="none" stroke="#ffff00" stroke-width="1.05"/><path d="M736.7 598.2L747.7 594.6L755.9 599.4L745.0 603.1Z" fill="none" stroke="#f01414" stroke-width="1.00"/><path d="M738.9 598.4L749.9 594.7L758.1 599.5L747.1 603.2Z" fill="none" stroke="#ffff00" stroke-width="1.05"/><path d="M603.2 677.1L614.2 673.4L622.4 678.2L611.4 681.9Z" fill="none" stroke="#f01414" stroke-width="1.00"/><path d="M605.3 677.2L616.3 673.5L624.6 678.4L613.6 682.0Z" fill="none" stroke="#ffff00" stroke-width="1.05"/><path d="M658.2 658.8L669.1 655.1L677.4 660.0L666.4 663.6Z" fill="none" stroke="#f01414" stroke-width="1.00"/><path d="M660.3 658.9L671.3 655.2L679.5 660.1L668.5 663.7Z" fill="none" stroke="#ffff00" stroke-width="1.05"/><path d="M711.7 641.0L722.7 637.3L730.9 642.1L719.9 645.8Z" fill="none" stroke="#f01414" stroke-width="1.00"/><path d="M713.8 641.1L724.8 637.4L733.0 642.3L722.1 645.9Z" fill="none" stroke="#ffff00" stroke-width="1.05"/><path d="M825.6 603.1L836.6 599.4L844.8 604.2L833.8 607.9Z" fill="none" stroke="#f01414" stroke-width="1.00"/><path d="M827.7 603.2L838.7 599.5L846.9 604.4L836.0 608.0Z" fill="none" stroke="#ffff00" stroke-width="1.05"/><path d="M879.5 585.1L890.5 581.5L898.7 586.3L887.7 590.0Z" fill="none" stroke="#f01414" stroke-width="1.00"/><path d="M881.7 585.3L892.7 581.6L900.9 586.4L889.9 590.1Z" fill="none" stroke="#ffff00" stroke-width="1.05"/><path d="M934.0 567.0L945.0 563.3L953.2 568.2L942.2 571.8Z" fill="none" stroke="#f01414" stroke-width="1.00"/><path d="M936.2 567.1L947.1 563.5L955.4 568.3L944.4 572.0Z" fill="none" stroke="#ffff00" stroke-width="1.05"/><path d="M948.1 527.9L959.1 524.3L967.3 529.1L956.3 532.7Z" fill="none" stroke="#f01414" stroke-width="1.00"/><path d="M950.3 528.0L961.2 524.4L969.5 529.2L958.5 532.9Z" fill="none" stroke="#ffff00" stroke-width="1.05"/><path d="M985.5 549.9L996.4 546.2L1004.7 551.1L993.7 554.7Z" fill="none" stroke="#f01414" stroke-width="1.00"/><path d="M987.6 550.0L998.6 546.4L1006.8 551.2L995.9 554.8Z" fill="none" stroke="#ffff00" stroke-width="1.05"/><path d="M1034.0 567.2L1023.0 570.8L1031.3 575.7L1042.3 572.0" fill="none" stroke="#ffff00" stroke-width="1.20"/><path d="M869.1 628.6L861.1 623.9L872.0 620.3L880.1 625.0" fill="none" stroke="#f01414" stroke-width="1.00"/><path d="M871.2 628.8L863.2 624.0L874.2 620.4L882.2 625.1" fill="none" stroke="#ffff00" stroke-width="1.20"/><path d="M923.0 610.7L915.0 606.0L926.0 602.3L934.0 607.0" fill="none" stroke="#f01414" stroke-width="1.00"/><path d="M925.2 610.8L917.2 606.1L928.1 602.4L936.2 607.2" fill="none" stroke="#ffff00" stroke-width="1.20"/><path d="M977.5 592.6L969.5 587.8L980.5 584.2L988.5 588.9" fill="none" stroke="#f01414" stroke-width="1.00"/><path d="M979.7 592.7L971.6 588.0L982.6 584.3L990.6 589.0" fill="none" stroke="#ffff00" stroke-width="1.20"/></svg><svg style="left:1143px;top:186px" width="773" height="784" viewBox="1143 186 773 784" fill="none"><path d="M1161.0 380.4L1900.0 380.4" stroke="#f01414" stroke-width="2.60"/><path d="M1161.0 777.3L1900.0 777.3" stroke="#f01414" stroke-width="3.00"/><path d="M1153.0 390.0L1153.0 767.0" stroke="#f01414" stroke-width="3.00"/><path d="M1908.4 390.0L1908.4 767.0" stroke="#f01414" stroke-width="3.00"/><path d="M1161.0 389.8L1899.0 389.8L1899.0 396.0L1161.0 396.0Z" fill="#00ffff" stroke="#ffff00" stroke-width="1.20"/><path d="M1162.0 392.9L1898.0 392.9" stroke="#ff00ff" stroke-width="4.00" stroke-dasharray="2.70 0.70"/><path d="M1435.2 396.0L1458.2 396.0L1458.2 398.2L1435.2 398.2Z" fill="#f01414"/><path d="M1435.2 389.8L1458.2 389.8L1458.2 396.4L1435.2 396.4Z" fill="none" stroke="#ffff00" stroke-width="1.20"/><path d="M1510.4 396.0L1549.0 396.0L1549.0 398.2L1510.4 398.2Z" fill="#f01414"/><path d="M1510.4 389.8L1549.0 389.8L1549.0 396.4L1510.4 396.4Z" fill="none" stroke="#ffff00" stroke-width="1.20"/><path d="M1602.3 396.0L1624.3 396.0L1624.3 398.2L1602.3 398.2Z" fill="#f01414"/><path d="M1602.3 389.8L1624.3 389.8L1624.3 396.4L1602.3 396.4Z" fill="none" stroke="#ffff00" stroke-width="1.20"/><path d="M1196.0 396.0L1211.0 396.0L1211.0 398.2L1196.0 398.2Z" fill="#f01414"/><path d="M1196.0 389.8L1211.0 389.8L1211.0 396.4L1196.0 396.4Z" fill="none" stroke="#ffff00" stroke-width="1.20"/><path d="M1229.0 396.0L1244.0 396.0L1244.0 398.2L1229.0 398.2Z" fill="#f01414"/><path d="M1229.0 389.8L1244.0 389.8L1244.0 396.4L1229.0 396.4Z" fill="none" stroke="#ffff00" stroke-width="1.20"/><path d="M1281.0 396.0L1297.0 396.0L1297.0 398.2L1281.0 398.2Z" fill="#f01414"/><path d="M1281.0 389.8L1297.0 389.8L1297.0 396.4L1281.0 396.4Z" fill="none" stroke="#ffff00" stroke-width="1.20"/><path d="M1762.4 396.0L1778.4 396.0L1778.4 398.2L1762.4 398.2Z" fill="#f01414"/><path d="M1762.4 389.8L1778.4 389.8L1778.4 396.4L1762.4 396.4Z" fill="none" stroke="#ffff00" stroke-width="1.20"/><path d="M1815.4 396.0L1830.4 396.0L1830.4 398.2L1815.4 398.2Z" fill="#f01414"/><path d="M1815.4 389.8L1830.4 389.8L1830.4 396.4L1815.4 396.4Z" fill="none" stroke="#ffff00" stroke-width="1.20"/><path d="M1848.4 396.0L1863.4 396.0L1863.4 398.2L1848.4 398.2Z" fill="#f01414"/><path d="M1848.4 389.8L1863.4 389.8L1863.4 396.4L1848.4 396.4Z" fill="none" stroke="#ffff00" stroke-width="1.20"/><path d="M1161.0 390.0L1167.0 390.0L1167.0 723.5L1161.0 723.5Z" fill="#00ffff" stroke="#ffff00" stroke-width="1.20"/><path d="M1164.0 391.0L1164.0 722.5" stroke="#ff00ff" stroke-width="3.80" stroke-dasharray="2.70 0.70"/><path d="M1168.6 488.5L1171.2 488.5L1171.2 503.0L1168.6 503.0Z" fill="#f01414"/><path d="M1161.0 488.5L1168.6 488.5L1168.6 503.0L1161.0 503.0Z" fill="#00ffff" stroke="#ffff00" stroke-width="1.20"/><path d="M1164.8 489.5L1164.8 502.0" stroke="#ff00ff" stroke-width="5.40" stroke-dasharray="2.70 0.70"/><path d="M1168.6 568.5L1171.2 568.5L1171.2 584.0L1168.6 584.0Z" fill="#f01414"/><path d="M1161.0 568.5L1168.6 568.5L1168.6 584.0L1161.0 584.0Z" fill="#00ffff" stroke="#ffff00" stroke-width="1.20"/><path d="M1164.8 569.5L1164.8 583.0" stroke="#ff00ff" stroke-width="5.40" stroke-dasharray="2.70 0.70"/><path d="M1168.6 641.3L1171.2 641.3L1171.2 658.0L1168.6 658.0Z" fill="#f01414"/><path d="M1161.0 641.3L1168.6 641.3L1168.6 658.0L1161.0 658.0Z" fill="#00ffff" stroke="#ffff00" stroke-width="1.20"/><path d="M1164.8 642.3L1164.8 657.0" stroke="#ff00ff" stroke-width="5.40" stroke-dasharray="2.70 0.70"/><path d="M1164.0 723.5L1179.5 748.4L1204.4 764.7" fill="none" stroke="#ffff00" stroke-width="7.20"/><path d="M1164.0 723.5L1179.5 748.4L1204.4 764.7" fill="none" stroke="#00ffff" stroke-width="5.00"/><path d="M1164.0 723.5L1179.5 748.4L1204.4 764.7" fill="none" stroke="#ff00ff" stroke-width="3.40"/><path d="M1156.0 715.0L1162.0 731.0" stroke="#9a35c9" stroke-width="1.00"/><path d="M1167.0 747.0L1183.0 763.0" stroke="#9a35c9" stroke-width="1.00"/><path d="M1196.0 396.0L1202.4 396.0L1202.4 432.0L1196.0 432.0Z" fill="#00ffff" stroke="#ffff00" stroke-width="1.20"/><path d="M1199.2 397.0L1199.2 431.0" stroke="#ff00ff" stroke-width="4.20" stroke-dasharray="2.70 0.70"/><path d="M1238.8 396.0L1244.0 396.0L1244.0 436.5L1238.8 436.5Z" fill="#00ffff" stroke="#ffff00" stroke-width="1.20"/><path d="M1241.4 397.0L1241.4 435.5" stroke="#ff00ff" stroke-width="3.00" stroke-dasharray="2.70 0.70"/><path d="M1285.5 396.0L1292.8 396.0L1292.8 427.0L1285.5 427.0Z" fill="#00ffff" stroke="#ffff00" stroke-width="1.20"/><path d="M1289.2 397.0L1289.2 426.0" stroke="#ff00ff" stroke-width="5.10" stroke-dasharray="2.70 0.70"/><path d="M1161.0 433.4L1203.0 433.4L1203.0 436.0L1161.0 436.0Z" fill="#f01414"/><path d="M1161.0 427.0L1203.0 427.0L1203.0 433.4L1161.0 433.4Z" fill="#00ffff" stroke="#ffff00" stroke-width="1.20"/><path d="M1162.0 430.2L1202.0 430.2" stroke="#ff00ff" stroke-width="4.20" stroke-dasharray="2.70 0.70"/><path d="M1206.0 436.5L1234.6 436.5L1234.6 439.1L1206.0 439.1Z" fill="#f01414"/><path d="M1206.0 427.0L1234.6 427.0L1234.6 436.5L1206.0 436.5Z" fill="#00ffff" stroke="#ffff00" stroke-width="1.20"/><path d="M1207.0 431.8L1233.6 431.8" stroke="#ff00ff" stroke-width="7.30" stroke-dasharray="2.70 0.70"/><path d="M1238.0 427.0L1281.4 427.0L1281.4 433.4L1238.0 433.4Z" fill="#00ffff" stroke="#ffff00" stroke-width="1.20"/><path d="M1239.0 430.2L1280.4 430.2" stroke="#ff00ff" stroke-width="4.20" stroke-dasharray="2.70 0.70"/><path d="M1297.0 427.0L1360.0 427.0L1360.0 433.4L1297.0 433.4Z" fill="#00ffff" stroke="#ffff00" stroke-width="1.20"/><path d="M1298.0 430.2L1359.0 430.2" stroke="#ff00ff" stroke-width="4.20" stroke-dasharray="2.70 0.70"/><path d="M1281.4 442.8L1298.5 442.8L1298.5 445.8L1281.4 445.8Z" fill="#f01414"/><path d="M1281.4 427.0L1297.0 427.0L1297.0 442.8L1281.4 442.8Z" fill="#ff00ff" stroke="#ffff00" stroke-width="1.20"/><path d="M1282.9 432.3L1295.5 432.3" stroke="#00ffff" stroke-width="1.00"/><path d="M1282.9 437.5L1295.5 437.5" stroke="#00ffff" stroke-width="1.00"/><path d="M1360.0 442.8L1377.5 442.8L1377.5 445.8L1360.0 445.8Z" fill="#f01414"/><path d="M1360.0 427.0L1376.0 427.0L1376.0 442.8L1360.0 442.8Z" fill="#ff00ff" stroke="#ffff00" stroke-width="1.20"/><path d="M1361.5 432.3L1374.5 432.3" stroke="#00ffff" stroke-width="1.00"/><path d="M1361.5 437.5L1374.5 437.5" stroke="#00ffff" stroke-width="1.00"/><path d="M1206.0 471.9L1234.6 471.9L1234.6 474.5L1206.0 474.5Z" fill="#f01414"/><path d="M1206.0 463.6L1234.6 463.6L1234.6 471.9L1206.0 471.9Z" fill="#00ffff" stroke="#ffff00" stroke-width="1.20"/><path d="M1207.0 467.8L1233.6 467.8" stroke="#ff00ff" stroke-width="6.10" stroke-dasharray="2.70 0.70"/><path d="M1206.0 503.0L1234.6 503.0L1234.6 505.6L1206.0 505.6Z" fill="#f01414"/><path d="M1206.0 494.7L1234.6 494.7L1234.6 503.0L1206.0 503.0Z" fill="#00ffff" stroke="#ffff00" stroke-width="1.20"/><path d="M1207.0 498.9L1233.6 498.9" stroke="#ff00ff" stroke-width="6.10" stroke-dasharray="2.70 0.70"/><path d="M1196.0 386.4L1211.0 386.4L1211.0 389.2L1196.0 389.2Z" fill="#f01414"/><path d="M1229.0 386.4L1244.0 386.4L1244.0 389.2L1229.0 389.2Z" fill="#f01414"/><path d="M1281.0 386.4L1297.0 386.4L1297.0 389.2L1281.0 389.2Z" fill="#f01414"/><path d="M1435.0 426.0L1479.0 426.0L1479.0 486.4L1435.0 486.4Z" fill="none" stroke="#f01414" stroke-width="1.20"/><path d="M1438.8 399.0L1529.7 399.0L1529.7 407.4L1438.8 407.4Z" fill="#00ffff" stroke="#ffff00" stroke-width="1.20"/><path d="M1439.8 403.2L1528.7 403.2" stroke="#ff00ff" stroke-width="6.20" stroke-dasharray="2.70 0.70"/><path d="M1521.5 406.0L1529.7 406.0L1529.7 447.0L1521.5 447.0Z" fill="#00ffff" stroke="#ffff00" stroke-width="1.20"/><path d="M1525.6 407.0L1525.6 446.0" stroke="#ff00ff" stroke-width="6.00" stroke-dasharray="2.70 0.70"/><path d="M1440.4 455.2L1529.7 455.2L1529.7 457.8L1440.4 457.8Z" fill="#f01414"/><path d="M1440.4 447.0L1529.7 447.0L1529.7 455.2L1440.4 455.2Z" fill="#00ffff" stroke="#ffff00" stroke-width="1.20"/><path d="M1441.4 451.1L1528.7 451.1" stroke="#ff00ff" stroke-width="6.00" stroke-dasharray="2.70 0.70"/><path d="M1439.4 427.0L1446.7 427.0L1446.7 485.4L1439.4 485.4Z" fill="#00ffff" stroke="#ffff00" stroke-width="1.20"/><path d="M1443.1 428.0L1443.1 484.4" stroke="#ff00ff" stroke-width="5.10" stroke-dasharray="2.70 0.70"/><path d="M1446.7 436.5L1475.0 436.5L1475.0 439.1L1446.7 439.1Z" fill="#f01414"/><path d="M1446.7 427.0L1475.0 427.0L1475.0 436.5L1446.7 436.5Z" fill="#00ffff" stroke="#ffff00" stroke-width="1.20"/><path d="M1447.7 431.8L1474.0 431.8" stroke="#ff00ff" stroke-width="7.30" stroke-dasharray="2.70 0.70"/><path d="M1446.7 485.4L1475.0 485.4L1475.0 488.0L1446.7 488.0Z" fill="#f01414"/><path d="M1446.7 476.0L1475.0 476.0L1475.0 485.4L1446.7 485.4Z" fill="#00ffff" stroke="#ffff00" stroke-width="1.20"/><path d="M1447.7 480.7L1474.0 480.7" stroke="#ff00ff" stroke-width="7.20" stroke-dasharray="2.70 0.70"/><path d="M1471.6 614.3L1480.0 614.3L1480.0 702.7L1471.6 702.7Z" fill="#00ffff" stroke="#ffff00" stroke-width="1.20"/><path d="M1475.8 615.3L1475.8 701.7" stroke="#ff00ff" stroke-width="6.20" stroke-dasharray="2.70 0.70"/><path d="M1520.5 614.3L1528.8 614.3L1528.8 702.7L1520.5 702.7Z" fill="#00ffff" stroke="#ffff00" stroke-width="1.20"/><path d="M1524.7 615.3L1524.7 701.7" stroke="#ff00ff" stroke-width="6.10" stroke-dasharray="2.70 0.70"/><path d="M1500.7 640.3L1516.3 640.3L1516.3 642.9L1500.7 642.9Z" fill="#f01414"/><path d="M1500.7 631.0L1516.3 631.0L1516.3 640.3L1500.7 640.3Z" fill="#00ffff" stroke="#ffff00" stroke-width="1.20"/><path d="M1501.7 635.6L1515.3 635.6" stroke="#ff00ff" stroke-width="7.10" stroke-dasharray="2.70 0.70"/><path d="M1500.7 725.5L1529.7 725.5L1529.7 728.1L1500.7 728.1Z" fill="#f01414"/><path d="M1500.7 716.0L1529.7 716.0L1529.7 725.5L1500.7 725.5Z" fill="#00ffff" stroke="#ffff00" stroke-width="1.20"/><path d="M1501.7 720.8L1528.7 720.8" stroke="#ff00ff" stroke-width="7.30" stroke-dasharray="2.70 0.70"/><path d="M1280.6 767.5L1296.6 767.5L1296.6 771.0L1280.6 771.0Z" fill="#f01414"/><path d="M1360.7 767.5L1376.7 767.5L1376.7 771.0L1360.7 771.0Z" fill="#f01414"/><path d="M1438.7 767.5L1454.7 767.5L1454.7 771.0L1438.7 771.0Z" fill="#f01414"/><path d="M1892.4 390.0L1898.4 390.0L1898.4 723.5L1892.4 723.5Z" fill="#00ffff" stroke="#ffff00" stroke-width="1.20"/><path d="M1895.4 391.0L1895.4 722.5" stroke="#ff00ff" stroke-width="3.80" stroke-dasharray="2.70 0.70"/><path d="M1888.2 488.5L1890.8 488.5L1890.8 503.0L1888.2 503.0Z" fill="#f01414"/><path d="M1890.8 488.5L1898.4 488.5L1898.4 503.0L1890.8 503.0Z" fill="#00ffff" stroke="#ffff00" stroke-width="1.20"/><path d="M1894.6 489.5L1894.6 502.0" stroke="#ff00ff" stroke-width="5.40" stroke-dasharray="2.70 0.70"/><path d="M1888.2 568.5L1890.8 568.5L1890.8 584.0L1888.2 584.0Z" fill="#f01414"/><path d="M1890.8 568.5L1898.4 568.5L1898.4 584.0L1890.8 584.0Z" fill="#00ffff" stroke="#ffff00" stroke-width="1.20"/><path d="M1894.6 569.5L1894.6 583.0" stroke="#ff00ff" stroke-width="5.40" stroke-dasharray="2.70 0.70"/><path d="M1888.2 641.3L1890.8 641.3L1890.8 658.0L1888.2 658.0Z" fill="#f01414"/><path d="M1890.8 641.3L1898.4 641.3L1898.4 658.0L1890.8 658.0Z" fill="#00ffff" stroke="#ffff00" stroke-width="1.20"/><path d="M1894.6 642.3L1894.6 657.0" stroke="#ff00ff" stroke-width="5.40" stroke-dasharray="2.70 0.70"/><path d="M1895.4 723.5L1879.9 748.4L1855.0 764.7" fill="none" stroke="#ffff00" stroke-width="7.20"/><path d="M1895.4 723.5L1879.9 748.4L1855.0 764.7" fill="none" stroke="#00ffff" stroke-width="5.00"/><path d="M1895.4 723.5L1879.9 748.4L1855.0 764.7" fill="none" stroke="#ff00ff" stroke-width="3.40"/><path d="M1903.4 715.0L1897.4 731.0" stroke="#9a35c9" stroke-width="1.00"/><path d="M1892.4 747.0L1876.4 763.0" stroke="#9a35c9" stroke-width="1.00"/><path d="M1857.0 396.0L1863.4 396.0L1863.4 432.0L1857.0 432.0Z" fill="#00ffff" stroke="#ffff00" stroke-width="1.20"/><path d="M1860.2 397.0L1860.2 431.0" stroke="#ff00ff" stroke-width="4.20" stroke-dasharray="2.70 0.70"/><path d="M1815.4 396.0L1820.6 396.0L1820.6 436.5L1815.4 436.5Z" fill="#00ffff" stroke="#ffff00" stroke-width="1.20"/><path d="M1818.0 397.0L1818.0 435.5" stroke="#ff00ff" stroke-width="3.00" stroke-dasharray="2.70 0.70"/><path d="M1766.6 396.0L1773.9 396.0L1773.9 427.0L1766.6 427.0Z" fill="#00ffff" stroke="#ffff00" stroke-width="1.20"/><path d="M1770.2 397.0L1770.2 426.0" stroke="#ff00ff" stroke-width="5.10" stroke-dasharray="2.70 0.70"/><path d="M1856.4 433.4L1898.4 433.4L1898.4 436.0L1856.4 436.0Z" fill="#f01414"/><path d="M1856.4 427.0L1898.4 427.0L1898.4 433.4L1856.4 433.4Z" fill="#00ffff" stroke="#ffff00" stroke-width="1.20"/><path d="M1857.4 430.2L1897.4 430.2" stroke="#ff00ff" stroke-width="4.20" stroke-dasharray="2.70 0.70"/><path d="M1824.8 436.5L1853.4 436.5L1853.4 439.1L1824.8 439.1Z" fill="#f01414"/><path d="M1824.8 427.0L1853.4 427.0L1853.4 436.5L1824.8 436.5Z" fill="#00ffff" stroke="#ffff00" stroke-width="1.20"/><path d="M1825.8 431.8L1852.4 431.8" stroke="#ff00ff" stroke-width="7.30" stroke-dasharray="2.70 0.70"/><path d="M1778.0 427.0L1821.4 427.0L1821.4 433.4L1778.0 433.4Z" fill="#00ffff" stroke="#ffff00" stroke-width="1.20"/><path d="M1779.0 430.2L1820.4 430.2" stroke="#ff00ff" stroke-width="4.20" stroke-dasharray="2.70 0.70"/><path d="M1699.4 427.0L1762.4 427.0L1762.4 433.4L1699.4 433.4Z" fill="#00ffff" stroke="#ffff00" stroke-width="1.20"/><path d="M1700.4 430.2L1761.4 430.2" stroke="#ff00ff" stroke-width="4.20" stroke-dasharray="2.70 0.70"/><path d="M1762.4 442.8L1779.5 442.8L1779.5 445.8L1762.4 445.8Z" fill="#f01414"/><path d="M1762.4 427.0L1778.0 427.0L1778.0 442.8L1762.4 442.8Z" fill="#ff00ff" stroke="#ffff00" stroke-width="1.20"/><path d="M1763.9 432.3L1776.5 432.3" stroke="#00ffff" stroke-width="1.00"/><path d="M1763.9 437.5L1776.5 437.5" stroke="#00ffff" stroke-width="1.00"/><path d="M1683.4 442.8L1700.9 442.8L1700.9 445.8L1683.4 445.8Z" fill="#f01414"/><path d="M1683.4 427.0L1699.4 427.0L1699.4 442.8L1683.4 442.8Z" fill="#ff00ff" stroke="#ffff00" stroke-width="1.20"/><path d="M1684.9 432.3L1697.9 432.3" stroke="#00ffff" stroke-width="1.00"/><path d="M1684.9 437.5L1697.9 437.5" stroke="#00ffff" stroke-width="1.00"/><path d="M1824.8 471.9L1853.4 471.9L1853.4 474.5L1824.8 474.5Z" fill="#f01414"/><path d="M1824.8 463.6L1853.4 463.6L1853.4 471.9L1824.8 471.9Z" fill="#00ffff" stroke="#ffff00" stroke-width="1.20"/><path d="M1825.8 467.8L1852.4 467.8" stroke="#ff00ff" stroke-width="6.10" stroke-dasharray="2.70 0.70"/><path d="M1824.8 503.0L1853.4 503.0L1853.4 505.6L1824.8 505.6Z" fill="#f01414"/><path d="M1824.8 494.7L1853.4 494.7L1853.4 503.0L1824.8 503.0Z" fill="#00ffff" stroke="#ffff00" stroke-width="1.20"/><path d="M1825.8 498.9L1852.4 498.9" stroke="#ff00ff" stroke-width="6.10" stroke-dasharray="2.70 0.70"/><path d="M1848.4 386.4L1863.4 386.4L1863.4 389.2L1848.4 389.2Z" fill="#f01414"/><path d="M1815.4 386.4L1830.4 386.4L1830.4 389.2L1815.4 389.2Z" fill="#f01414"/><path d="M1762.4 386.4L1778.4 386.4L1778.4 389.2L1762.4 389.2Z" fill="#f01414"/><path d="M1580.4 426.0L1624.4 426.0L1624.4 486.4L1580.4 486.4Z" fill="none" stroke="#f01414" stroke-width="1.20"/><path d="M1529.7 399.0L1620.6 399.0L1620.6 407.4L1529.7 407.4Z" fill="#00ffff" stroke="#ffff00" stroke-width="1.20"/><path d="M1530.7 403.2L1619.6 403.2" stroke="#ff00ff" stroke-width="6.20" stroke-dasharray="2.70 0.70"/><path d="M1529.7 406.0L1537.9 406.0L1537.9 447.0L1529.7 447.0Z" fill="#00ffff" stroke="#ffff00" stroke-width="1.20"/><path d="M1533.8 407.0L1533.8 446.0" stroke="#ff00ff" stroke-width="6.00" stroke-dasharray="2.70 0.70"/><path d="M1529.7 455.2L1619.0 455.2L1619.0 457.8L1529.7 457.8Z" fill="#f01414"/><path d="M1529.7 447.0L1619.0 447.0L1619.0 455.2L1529.7 455.2Z" fill="#00ffff" stroke="#ffff00" stroke-width="1.20"/><path d="M1530.7 451.1L1618.0 451.1" stroke="#ff00ff" stroke-width="6.00" stroke-dasharray="2.70 0.70"/><path d="M1612.7 427.0L1620.0 427.0L1620.0 485.4L1612.7 485.4Z" fill="#00ffff" stroke="#ffff00" stroke-width="1.20"/><path d="M1616.3 428.0L1616.3 484.4" stroke="#ff00ff" stroke-width="5.10" stroke-dasharray="2.70 0.70"/><path d="M1584.4 436.5L1612.7 436.5L1612.7 439.1L1584.4 439.1Z" fill="#f01414"/><path d="M1584.4 427.0L1612.7 427.0L1612.7 436.5L1584.4 436.5Z" fill="#00ffff" stroke="#ffff00" stroke-width="1.20"/><path d="M1585.4 431.8L1611.7 431.8" stroke="#ff00ff" stroke-width="7.30" stroke-dasharray="2.70 0.70"/><path d="M1584.4 485.4L1612.7 485.4L1612.7 488.0L1584.4 488.0Z" fill="#f01414"/><path d="M1584.4 476.0L1612.7 476.0L1612.7 485.4L1584.4 485.4Z" fill="#00ffff" stroke="#ffff00" stroke-width="1.20"/><path d="M1585.4 480.7L1611.7 480.7" stroke="#ff00ff" stroke-width="7.20" stroke-dasharray="2.70 0.70"/><path d="M1579.4 614.3L1587.8 614.3L1587.8 702.7L1579.4 702.7Z" fill="#00ffff" stroke="#ffff00" stroke-width="1.20"/><path d="M1583.6 615.3L1583.6 701.7" stroke="#ff00ff" stroke-width="6.20" stroke-dasharray="2.70 0.70"/><path d="M1530.6 614.3L1538.9 614.3L1538.9 702.7L1530.6 702.7Z" fill="#00ffff" stroke="#ffff00" stroke-width="1.20"/><path d="M1534.8 615.3L1534.8 701.7" stroke="#ff00ff" stroke-width="6.10" stroke-dasharray="2.70 0.70"/><path d="M1543.1 640.3L1558.7 640.3L1558.7 642.9L1543.1 642.9Z" fill="#f01414"/><path d="M1543.1 631.0L1558.7 631.0L1558.7 640.3L1543.1 640.3Z" fill="#00ffff" stroke="#ffff00" stroke-width="1.20"/><path d="M1544.1 635.6L1557.7 635.6" stroke="#ff00ff" stroke-width="7.10" stroke-dasharray="2.70 0.70"/><path d="M1529.7 725.5L1558.7 725.5L1558.7 728.1L1529.7 728.1Z" fill="#f01414"/><path d="M1529.7 716.0L1558.7 716.0L1558.7 725.5L1529.7 725.5Z" fill="#00ffff" stroke="#ffff00" stroke-width="1.20"/><path d="M1530.7 720.8L1557.7 720.8" stroke="#ff00ff" stroke-width="7.30" stroke-dasharray="2.70 0.70"/><path d="M1762.8 767.5L1778.8 767.5L1778.8 771.0L1762.8 771.0Z" fill="#f01414"/><path d="M1682.7 767.5L1698.7 767.5L1698.7 771.0L1682.7 771.0Z" fill="#f01414"/><path d="M1604.7 767.5L1620.7 767.5L1620.7 771.0L1604.7 771.0Z" fill="#f01414"/><path d="M1471.6 694.0L1587.8 694.0L1587.8 702.7L1471.6 702.7Z" fill="#00ffff" stroke="#ffff00" stroke-width="1.20"/><path d="M1472.6 698.4L1586.8 698.4" stroke="#ff00ff" stroke-width="6.50" stroke-dasharray="2.70 0.70"/><path d="M1469.5 704.6L1469.5 612.8L1589.9 612.8L1589.9 704.6Z" fill="none" stroke="#f01414" stroke-width="1.20"/><path d="M1509.0 640.3L1550.4 640.3L1550.4 656.0L1509.0 656.0Z" fill="none" stroke="#f01414" stroke-width="1.20"/><path d="M1513.7 767.5L1545.7 767.5L1545.7 771.0L1513.7 771.0Z" fill="#f01414"/><path d="M1204.0 762.0L1855.4 762.0L1855.4 767.5L1204.0 767.5Z" fill="#00ffff" stroke="#ffff00" stroke-width="1.20"/><path d="M1205.0 764.8L1854.4 764.8" stroke="#ff00ff" stroke-width="3.30" stroke-dasharray="2.70 0.70"/><path d="M1222.0 568.5L1225.0 568.5L1225.0 585.5L1222.0 585.5Z" fill="#f01414"/><path d="M1206.0 568.5L1222.0 568.5L1222.0 584.0L1206.0 584.0Z" fill="#ff00ff" stroke="#ffff00" stroke-width="1.20"/><path d="M1207.5 573.7L1220.5 573.7" stroke="#00ffff" stroke-width="1.00"/><path d="M1207.5 578.8L1220.5 578.8" stroke="#00ffff" stroke-width="1.00"/><path d="M1222.0 641.3L1225.0 641.3L1225.0 659.5L1222.0 659.5Z" fill="#f01414"/><path d="M1206.0 641.3L1222.0 641.3L1222.0 658.0L1206.0 658.0Z" fill="#ff00ff" stroke="#ffff00" stroke-width="1.20"/><path d="M1207.5 646.9L1220.5 646.9" stroke="#00ffff" stroke-width="1.00"/><path d="M1207.5 652.4L1220.5 652.4" stroke="#00ffff" stroke-width="1.00"/><path d="M1222.0 710.6L1225.0 710.6L1225.0 728.1L1222.0 728.1Z" fill="#f01414"/><path d="M1206.0 710.6L1222.0 710.6L1222.0 726.6L1206.0 726.6Z" fill="#ff00ff" stroke="#ffff00" stroke-width="1.20"/><path d="M1207.5 715.9L1220.5 715.9" stroke="#00ffff" stroke-width="1.00"/><path d="M1207.5 721.3L1220.5 721.3" stroke="#00ffff" stroke-width="1.00"/><path d="M1280.6 726.6L1298.1 726.6L1298.1 729.6L1280.6 729.6Z" fill="#f01414"/><path d="M1280.6 710.6L1296.6 710.6L1296.6 726.6L1280.6 726.6Z" fill="#ff00ff" stroke="#ffff00" stroke-width="1.20"/><path d="M1282.1 715.9L1295.1 715.9" stroke="#00ffff" stroke-width="1.00"/><path d="M1282.1 721.3L1295.1 721.3" stroke="#00ffff" stroke-width="1.00"/><path d="M1360.7 726.6L1378.2 726.6L1378.2 729.6L1360.7 729.6Z" fill="#f01414"/><path d="M1360.7 710.6L1376.7 710.6L1376.7 726.6L1360.7 726.6Z" fill="#ff00ff" stroke="#ffff00" stroke-width="1.20"/><path d="M1362.2 715.9L1375.2 715.9" stroke="#00ffff" stroke-width="1.00"/><path d="M1362.2 721.3L1375.2 721.3" stroke="#00ffff" stroke-width="1.00"/><path d="M1438.7 726.6L1456.2 726.6L1456.2 729.6L1438.7 729.6Z" fill="#f01414"/><path d="M1438.7 710.6L1454.7 710.6L1454.7 726.6L1438.7 726.6Z" fill="#ff00ff" stroke="#ffff00" stroke-width="1.20"/><path d="M1440.2 715.9L1453.2 715.9" stroke="#00ffff" stroke-width="1.00"/><path d="M1440.2 721.3L1453.2 721.3" stroke="#00ffff" stroke-width="1.00"/><path d="M1280.6 495.7L1296.6 495.7L1296.6 511.7L1280.6 511.7Z" fill="none" stroke="#ffff00" stroke-width="1.50"/><path d="M1360.7 495.7L1376.7 495.7L1376.7 511.7L1360.7 511.7Z" fill="none" stroke="#ffff00" stroke-width="1.50"/><path d="M1438.7 495.7L1454.7 495.7L1454.7 511.7L1438.7 511.7Z" fill="none" stroke="#ffff00" stroke-width="1.50"/><path d="M1604.7 495.7L1620.7 495.7L1620.7 511.7L1604.7 511.7Z" fill="none" stroke="#ffff00" stroke-width="1.50"/><path d="M1683.3 495.7L1699.3 495.7L1699.3 511.7L1683.3 511.7Z" fill="none" stroke="#ffff00" stroke-width="1.50"/><path d="M1762.7 495.7L1778.7 495.7L1778.7 511.7L1762.7 511.7Z" fill="none" stroke="#ffff00" stroke-width="1.50"/><path d="M1513.7 495.7L1529.7 495.7L1529.7 511.7L1513.7 511.7Z" fill="none" stroke="#ffff00" stroke-width="1.50"/><path d="M1529.7 495.7L1545.7 495.7L1545.7 511.7L1529.7 511.7Z" fill="none" stroke="#ffff00" stroke-width="1.50"/><path d="M1280.6 568.9L1296.6 568.9L1296.6 584.9L1280.6 584.9Z" fill="none" stroke="#ffff00" stroke-width="1.50"/><path d="M1360.7 568.9L1376.7 568.9L1376.7 584.9L1360.7 584.9Z" fill="none" stroke="#ffff00" stroke-width="1.50"/><path d="M1438.7 568.9L1454.7 568.9L1454.7 584.9L1438.7 584.9Z" fill="none" stroke="#ffff00" stroke-width="1.50"/><path d="M1604.7 568.9L1620.7 568.9L1620.7 584.9L1604.7 584.9Z" fill="none" stroke="#ffff00" stroke-width="1.50"/><path d="M1683.3 568.9L1699.3 568.9L1699.3 584.9L1683.3 584.9Z" fill="none" stroke="#ffff00" stroke-width="1.50"/><path d="M1762.7 568.9L1778.7 568.9L1778.7 584.9L1762.7 584.9Z" fill="none" stroke="#ffff00" stroke-width="1.50"/><path d="M1513.7 568.9L1529.7 568.9L1529.7 584.9L1513.7 584.9Z" fill="none" stroke="#ffff00" stroke-width="1.50"/><path d="M1529.7 568.9L1545.7 568.9L1545.7 584.9L1529.7 584.9Z" fill="none" stroke="#ffff00" stroke-width="1.50"/><path d="M1280.6 641.6L1296.6 641.6L1296.6 657.6L1280.6 657.6Z" fill="none" stroke="#ffff00" stroke-width="1.50"/><path d="M1360.7 641.6L1376.7 641.6L1376.7 657.6L1360.7 657.6Z" fill="none" stroke="#ffff00" stroke-width="1.50"/><path d="M1438.7 641.6L1454.7 641.6L1454.7 657.6L1438.7 657.6Z" fill="none" stroke="#ffff00" stroke-width="1.50"/><path d="M1604.7 641.6L1620.7 641.6L1620.7 657.6L1604.7 657.6Z" fill="none" stroke="#ffff00" stroke-width="1.50"/><path d="M1683.3 641.6L1699.3 641.6L1699.3 657.6L1683.3 657.6Z" fill="none" stroke="#ffff00" stroke-width="1.50"/><path d="M1762.7 641.6L1778.7 641.6L1778.7 657.6L1762.7 657.6Z" fill="none" stroke="#ffff00" stroke-width="1.50"/><path d="M1837.7 568.9L1853.7 568.9L1853.7 584.9L1837.7 584.9Z" fill="none" stroke="#ffff00" stroke-width="1.50"/><path d="M1837.7 641.6L1853.7 641.6L1853.7 657.6L1837.7 657.6Z" fill="none" stroke="#ffff00" stroke-width="1.50"/><path d="M1853.7 710.5L1837.7 710.5L1837.7 726.5L1853.7 726.5" fill="none" stroke="#ffff00" stroke-width="1.50"/><path d="M1604.7 726.2L1604.7 710.6L1620.7 710.6L1620.7 726.2" fill="none" stroke="#ffff00" stroke-width="1.50"/><path d="M1683.3 726.2L1683.3 710.6L1699.3 710.6L1699.3 726.2" fill="none" stroke="#ffff00" stroke-width="1.50"/><path d="M1762.7 726.2L1762.7 710.6L1778.7 710.6L1778.7 726.2" fill="none" stroke="#ffff00" stroke-width="1.50"/><path d="M1160.4 376.0L1160.4 781.5" stroke="#9a35c9" stroke-width="1.30"/><path d="M1195.7 376.0L1195.7 781.5" stroke="#9a35c9" stroke-width="1.30"/><path d="M1205.7 376.0L1205.7 781.5" stroke="#9a35c9" stroke-width="1.30"/><path d="M1244.6 376.0L1244.6 781.5" stroke="#9a35c9" stroke-width="1.30"/><path d="M1271.0 376.0L1271.0 781.5" stroke="#9a35c9" stroke-width="1.30"/><path d="M1288.6 376.0L1288.6 781.5" stroke="#9a35c9" stroke-width="1.30"/><path d="M1446.7 376.0L1446.7 781.5" stroke="#9a35c9" stroke-width="1.30"/><path d="M1500.3 376.0L1500.3 781.5" stroke="#9a35c9" stroke-width="1.30"/><path d="M1559.1 376.0L1559.1 781.5" stroke="#9a35c9" stroke-width="1.30"/><path d="M1612.7 376.0L1612.7 781.5" stroke="#9a35c9" stroke-width="1.30"/><path d="M1770.7 376.0L1770.7 781.5" stroke="#9a35c9" stroke-width="1.30"/><path d="M1788.4 376.0L1788.4 781.5" stroke="#9a35c9" stroke-width="1.30"/><path d="M1814.8 376.0L1814.8 781.5" stroke="#9a35c9" stroke-width="1.30"/><path d="M1853.9 376.0L1853.9 781.5" stroke="#9a35c9" stroke-width="1.30"/><path d="M1863.9 376.0L1863.9 781.5" stroke="#9a35c9" stroke-width="1.30"/><path d="M1899.0 376.0L1899.0 781.5" stroke="#9a35c9" stroke-width="1.30"/><path d="M1368.7 373.0L1368.7 783.0" stroke="#9a35c9" stroke-width="2.60"/><path d="M1529.7 373.0L1529.7 783.0" stroke="#9a35c9" stroke-width="2.60"/><path d="M1691.3 373.0L1691.3 783.0" stroke="#9a35c9" stroke-width="2.60"/><path d="M1148.0 389.1L1911.5 389.1" stroke="#9a35c9" stroke-width="1.30"/><path d="M1148.0 426.5L1911.5 426.5" stroke="#9a35c9" stroke-width="1.30"/><path d="M1148.0 455.9L1911.5 455.9" stroke="#9a35c9" stroke-width="1.30"/><path d="M1148.0 462.9L1911.5 462.9" stroke="#9a35c9" stroke-width="1.30"/><path d="M1148.0 503.7L1911.5 503.7" stroke="#9a35c9" stroke-width="1.30"/><path d="M1148.0 576.9L1911.5 576.9" stroke="#9a35c9" stroke-width="1.30"/><path d="M1148.0 630.5L1911.5 630.5" stroke="#9a35c9" stroke-width="1.30"/><path d="M1148.0 649.6L1911.5 649.6" stroke="#9a35c9" stroke-width="1.30"/><path d="M1148.0 702.7L1911.5 702.7" stroke="#9a35c9" stroke-width="1.30"/><path d="M1148.0 726.2L1911.5 726.2" stroke="#9a35c9" stroke-width="1.30"/><path d="M1148.0 767.7L1911.5 767.7" stroke="#9a35c9" stroke-width="1.30"/><path d="M1145.0 723.5L1914.0 723.5" stroke="#9a35c9" stroke-width="1.30"/></svg><div class="abs" style="left:479px;top:257px;font-size:24px;line-height:33px;color:#e8202a;white-space:nowrap" id="redtxt"><span style="letter-spacing:-0.05px">aks a çevrilmek istenen çizigi veya çizgiler</span><br><span style="letter-spacing:0.156px">seçilir. Veya bir katman çift tıklanıp hızlıca hepsi</span><br><span style="letter-spacing:0.336px">seçilebilir. dönüştür ile istenilen eleman</span><br><span style="letter-spacing:0.63px">dönüştürülür.</span></div><div class="abs" style="left:656.25px;top:188px;width:225.6px;height:39.8px;background:#333337"></div><svg style="left:661.9px;top:194px" width="28" height="28" viewBox="0 0 28 28" ><rect x="1" y="1" width="26" height="26" fill="none" stroke="#d4d4d4" stroke-width="2"/><g transform="rotate(0 14 14)"><path d="M4.4 4.4H11.2L9 6.6L12.4 10L10 12.4L6.6 9L4.4 11.2Z" fill="#d4d4d4"/></g><g transform="rotate(90 14 14)"><path d="M4.4 4.4H11.2L9 6.6L12.4 10L10 12.4L6.6 9L4.4 11.2Z" fill="#d4d4d4"/></g><g transform="rotate(180 14 14)"><path d="M4.4 4.4H11.2L9 6.6L12.4 10L10 12.4L6.6 9L4.4 11.2Z" fill="#d4d4d4"/></g><g transform="rotate(270 14 14)"><path d="M4.4 4.4H11.2L9 6.6L12.4 10L10 12.4L6.6 9L4.4 11.2Z" fill="#d4d4d4"/></g></svg><svg style="left:701.1px;top:201px" width="28" height="16" viewBox="0 0 28 16" ><path d="M13.4 12.2C5.6 12 1 9.6 1 6.6C1 3.2 6.4 0.9 14 0.9S27 3.2 27 6.6C27 8.8 24.4 10.6 20.6 11.6" fill="none" stroke="#d4d4d4" stroke-width="1.7"/><path d="M11.6 8.2L17.2 12.4L11.6 15.8Z" fill="#d4d4d4"/></svg><svg style="left:738.5px;top:192.5px" width="32" height="32" viewBox="0 0 32 32" ><g transform="rotate(0 15.6 15.6)"><path d="M15.6 0L22.5 6.6H17.8V11.6H13.4V6.6H8.7Z" fill="#d4d4d4"/></g><g transform="rotate(90 15.6 15.6)"><path d="M15.6 0L22.5 6.6H17.8V11.6H13.4V6.6H8.7Z" fill="#d4d4d4"/></g><g transform="rotate(180 15.6 15.6)"><path d="M15.6 0L22.5 6.6H17.8V11.6H13.4V6.6H8.7Z" fill="#d4d4d4"/></g><g transform="rotate(270 15.6 15.6)"><path d="M15.6 0L22.5 6.6H17.8V11.6H13.4V6.6H8.7Z" fill="#d4d4d4"/></g></svg><svg style="left:776.9px;top:191.75px" width="33" height="33" viewBox="0 0 33 33" ><path d="M16 0.4L30.9 6.25L16 11L1.6 6.25Z" fill="#d4d4d4"/><path d="M0 8.25L15 13.5V32.25L0 26Z" fill="#d4d4d4"/><path d="M17.1 13.5L32.5 8.25V26L17.1 32.25Z" fill="#d4d4d4"/></svg><svg style="left:816.25px;top:206.9px" width="8" height="4" viewBox="0 0 8 4" ><path d="M0 0H7.8L3.9 4Z" fill="#d4d4d4"/></svg><svg style="left:834.75px;top:194px" width="25" height="29" viewBox="0 0 25 29" ><path d="M0 0.25H24.25L14 14.4V23.75L10.25 28.1V14.4Z" fill="#d4d4d4"/></svg><svg style="left:870.0px;top:206.9px" width="8" height="4" viewBox="0 0 8 4" ><path d="M0 0H7.8L3.9 4Z" fill="#d4d4d4"/></svg><div class="abs" style="left:1416.3px;top:188px;width:225.6px;height:39.8px;background:#333337"></div><svg style="left:1421.95px;top:194px" width="28" height="28" viewBox="0 0 28 28" ><rect x="1" y="1" width="26" height="26" fill="none" stroke="#d4d4d4" stroke-width="2"/><g transform="rotate(0 14 14)"><path d="M4.4 4.4H11.2L9 6.6L12.4 10L10 12.4L6.6 9L4.4 11.2Z" fill="#d4d4d4"/></g><g transform="rotate(90 14 14)"><path d="M4.4 4.4H11.2L9 6.6L12.4 10L10 12.4L6.6 9L4.4 11.2Z" fill="#d4d4d4"/></g><g transform="rotate(180 14 14)"><path d="M4.4 4.4H11.2L9 6.6L12.4 10L10 12.4L6.6 9L4.4 11.2Z" fill="#d4d4d4"/></g><g transform="rotate(270 14 14)"><path d="M4.4 4.4H11.2L9 6.6L12.4 10L10 12.4L6.6 9L4.4 11.2Z" fill="#d4d4d4"/></g></svg><svg style="left:1461.1499999999999px;top:201px" width="28" height="16" viewBox="0 0 28 16" ><path d="M13.4 12.2C5.6 12 1 9.6 1 6.6C1 3.2 6.4 0.9 14 0.9S27 3.2 27 6.6C27 8.8 24.4 10.6 20.6 11.6" fill="none" stroke="#d4d4d4" stroke-width="1.7"/><path d="M11.6 8.2L17.2 12.4L11.6 15.8Z" fill="#d4d4d4"/></svg><svg style="left:1498.55px;top:192.5px" width="32" height="32" viewBox="0 0 32 32" ><g transform="rotate(0 15.6 15.6)"><path d="M15.6 0L22.5 6.6H17.8V11.6H13.4V6.6H8.7Z" fill="#d4d4d4"/></g><g transform="rotate(90 15.6 15.6)"><path d="M15.6 0L22.5 6.6H17.8V11.6H13.4V6.6H8.7Z" fill="#d4d4d4"/></g><g transform="rotate(180 15.6 15.6)"><path d="M15.6 0L22.5 6.6H17.8V11.6H13.4V6.6H8.7Z" fill="#d4d4d4"/></g><g transform="rotate(270 15.6 15.6)"><path d="M15.6 0L22.5 6.6H17.8V11.6H13.4V6.6H8.7Z" fill="#d4d4d4"/></g></svg><svg style="left:1536.95px;top:191.75px" width="33" height="33" viewBox="0 0 33 33" ><path d="M16 0.4L30.9 6.25L16 11L1.6 6.25Z" fill="#d4d4d4"/><path d="M0 8.25L15 13.5V32.25L0 26Z" fill="#d4d4d4"/><path d="M17.1 13.5L32.5 8.25V26L17.1 32.25Z" fill="#d4d4d4"/></svg><svg style="left:1576.3px;top:206.9px" width="8" height="4" viewBox="0 0 8 4" ><path d="M0 0H7.8L3.9 4Z" fill="#d4d4d4"/></svg><svg style="left:1594.8px;top:194px" width="25" height="29" viewBox="0 0 25 29" ><path d="M0 0.25H24.25L14 14.4V23.75L10.25 28.1V14.4Z" fill="#d4d4d4"/></svg><svg style="left:1630.05px;top:206.9px" width="8" height="4" viewBox="0 0 8 4" ><path d="M0 0H7.8L3.9 4Z" fill="#d4d4d4"/></svg><svg style="left:420px;top:868px" width="80" height="64" viewBox="420 868 80 64"><defs><linearGradient id="gy" x1="0" y1="0" x2="1" y2="1"><stop offset="0" stop-color="#9a9a9a"/><stop offset="1" stop-color="#c8c8c8"/></linearGradient></defs><path d="M441 910.7L457.2 905.2L470.2 912.6L453 918.4Z" fill="#0000ee"/><path d="M436.4 912.6L451.6 921" stroke="#a4a4a4" stroke-width="3.6" stroke-linecap="round"/><circle cx="436.6" cy="912.8" r="2.7" fill="#b0b0b0"/><path d="M455 921L472 914.6" stroke="#b0b0b0" stroke-width="3.6"/><path d="M470.4 910.4L479.6 912.2L474 918.6Z" fill="#b8b8b8"/><path d="M453.1 922V898" stroke="#ee0000" stroke-width="4.3"/><path d="M448.7 899.4L453.1 890.8L457.5 899.4Z" fill="#ee0000"/><circle cx="453.1" cy="921.4" r="3" fill="#ee0000"/><path d="M452.8 877.4H459.3L452.8 886.6H459.3M428.9 898.3L433.5 903.8L438.1 898.3M433.5 903.8V907.8M483 901.3L491 910.8M491 901.3L483 910.8" fill="none" stroke="#fff" stroke-width="1.1"/></svg><svg style="left:1180px;top:866px" width="70" height="64" viewBox="1180 866 70 64"><rect x="1193.9" y="895.9" width="23.1" height="23" fill="#0000ff"/><path d="M1191.9 921V895.6" stroke="#c4c4c4" stroke-width="3.7"/><path d="M1187.9 896.2L1191.9 887.7L1196 896.2Z" fill="#b4b4b4"/><path d="M1192 920.9H1217.4" stroke="#c4c4c4" stroke-width="3.5"/><path d="M1217 917L1225.2 921L1217 924.8Z" fill="#b4b4b4"/><circle cx="1191.8" cy="921" r="3.85" fill="#e00000"/><path d="M1191.3 873.4L1195.5 878.4L1199.7 873.4M1195.5 878.4V882.6M1230.3 911.7L1237.7 920.6M1237.7 911.7L1230.3 920.6" fill="none" stroke="#fff" stroke-width="1.1"/></svg>
<div class="abs" style="left:867px;top:134px;width:142px;height:72px;background:#252526;border:1px solid #3a3a3e;box-shadow:2px 2px 4px rgba(0,0,0,.55)"></div><div class="t" style="left:901px;top:141px;font-size:12px;letter-spacing:-0.1px">Cad To Grid</div><div class="t" style="left:901px;top:164px;font-size:12px;letter-spacing:-0.1px">Cad To Beam</div><div class="t" style="left:901px;top:187px;font-size:12px;letter-spacing:-0.1px">Cad To Column</div><div class="abs" style="left:870px;top:131px;width:141px;height:32px;border:5px solid #ee1c25"></div>
<svg style="left:4px;top:981px" width="18" height="15" viewBox="0 0 18 15" ><rect x="0" y="0" width="17.4" height="4.2" fill="#5a80c8"/><rect x="0" y="5.4" width="5" height="3.6" fill="#8c8c8c"/><rect x="0" y="10.2" width="5" height="3.6" fill="#8c8c8c"/><rect x="6.2" y="5.4" width="5" height="3.6" fill="#8c8c8c"/><rect x="6.2" y="10.2" width="5" height="3.6" fill="#8c8c8c"/><rect x="12.4" y="5.4" width="5" height="3.6" fill="#8c8c8c"/><rect x="12.4" y="10.2" width="5" height="3.6" fill="#8c8c8c"/></svg><div class="t" style="left:26px;top:982px;font-size:12.5px">Tablolar</div><div class="abs" style="left:3px;top:1002px;width:66px;height:6px;background:#3a3a3e"></div><div id="st" class="abs"></div><div id="stb" class="abs"></div><div class="t" style="left:4px;top:1014px;color:#fff">Sta Bil.Muh.Mus.Ltd.Sti.-YTU Teknopark</div><div class="abs" style="left:217px;top:1010px;width:1px;height:19px;background:#2a8ad4"></div><div class="t" style="left:225px;top:1014px;color:#fff">Son işlem süresi (0,391)</div><div class="abs" style="left:1673px;top:1009px;width:1px;height:21px;background:#0a68b0"></div><div class="t" style="left:1684px;top:1014px;color:#fff">Birimler</div><svg style="left:1732px;top:1019px" width="8" height="4" viewBox="0 0 8 4" ><path d="M0 0H7.6L3.8 3.8Z" fill="#fff"/></svg><div class="t" style="left:1747px;top:1014px;color:#fff">Ortho</div><div class="t" style="left:1785px;top:1014px;color:#fff">Nokta Yakalama</div><svg style="left:1878px;top:1019px" width="8" height="4" viewBox="0 0 8 4" ><path d="M0 0H7.6L3.8 3.8Z" fill="#fff"/></svg><svg style="left:1909px;top:1021px" width="9" height="9" viewBox="0 0 9 9" ><rect x="6" y="0" width="1.2" height="1.2" fill="#9fcdf0"/><rect x="3" y="3" width="1.2" height="1.2" fill="#9fcdf0"/><rect x="6" y="3" width="1.2" height="1.2" fill="#9fcdf0"/><rect x="0" y="6" width="1.2" height="1.2" fill="#9fcdf0"/><rect x="3" y="6" width="1.2" height="1.2" fill="#9fcdf0"/><rect x="6" y="6" width="1.2" height="1.2" fill="#9fcdf0"/></svg></body></html>
